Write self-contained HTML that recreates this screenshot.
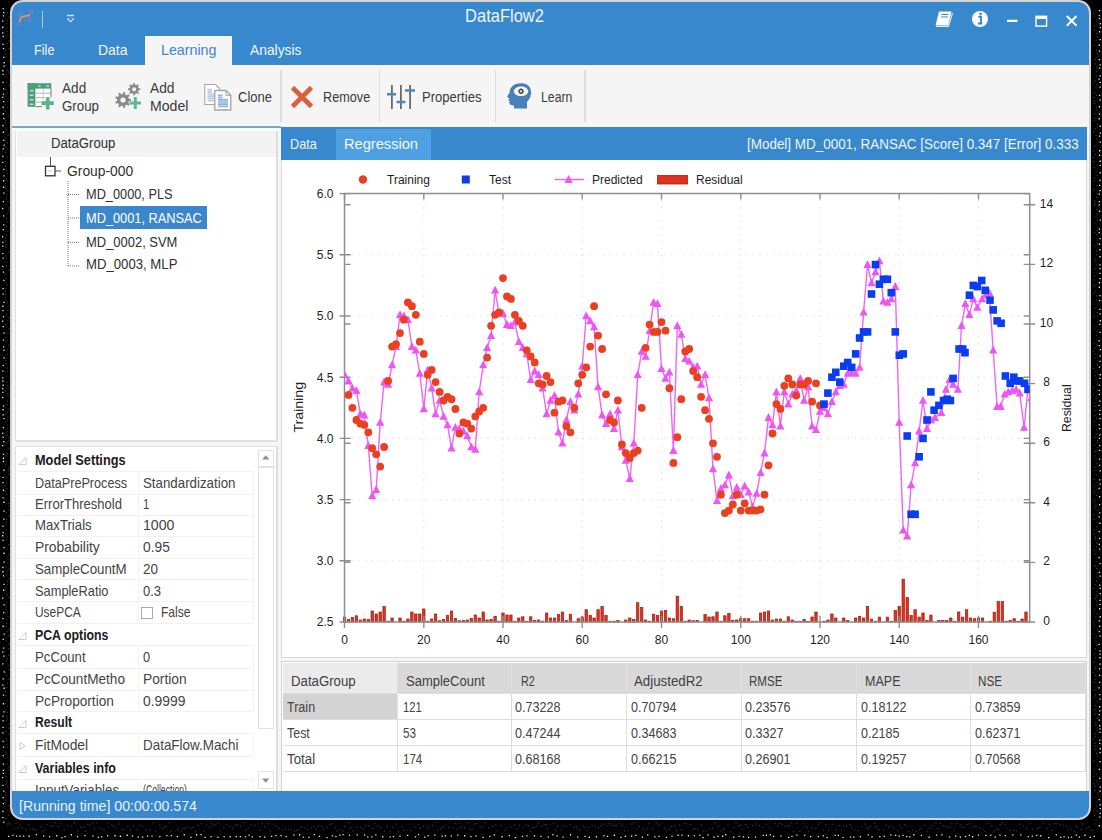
<!DOCTYPE html><html><head><meta charset="utf-8"><style>
html,body{margin:0;padding:0;}
body{width:1102px;height:840px;background:#000;position:relative;overflow:hidden;font-family:"Liberation Sans", sans-serif;}
#win{position:absolute;left:10px;top:0;width:1081px;height:820px;box-sizing:border-box;border:2px solid #d3d3d3;border-radius:12.5px;overflow:hidden;background:#f5f5f5;}
#in{position:absolute;left:-12px;top:-2px;width:1102px;height:840px;}
.r{position:absolute;}
.t{position:absolute;white-space:nowrap;line-height:1;}
</style></head><body><svg style="position:absolute;left:0;top:0" width="1102" height="840"><path d="M6.7 12.0h1.2v1.2h-1.2zM8.1 16.3h1.2v1.2h-1.2zM7.0 19.6h1.2v1.2h-1.2zM6.5 23.1h1.2v1.2h-1.2zM6.3 27.2h1.2v1.2h-1.2zM6.4 30.8h1.2v1.2h-1.2zM7.3 35.6h1.2v1.2h-1.2zM8.3 40.3h1.2v1.2h-1.2zM6.7 43.0h1.2v1.2h-1.2zM7.9 47.9h1.2v1.2h-1.2zM5.0 50.3h1.2v1.2h-1.2zM4.8 53.6h1.2v1.2h-1.2zM4.8 56.3h1.2v1.2h-1.2zM7.6 60.3h1.2v1.2h-1.2zM5.1 65.0h1.2v1.2h-1.2zM7.1 69.2h1.2v1.2h-1.2zM8.0 71.6h1.2v1.2h-1.2zM5.4 76.5h1.2v1.2h-1.2zM6.1 81.4h1.2v1.2h-1.2zM8.5 84.8h1.2v1.2h-1.2zM5.1 89.3h1.2v1.2h-1.2zM6.6 92.6h1.2v1.2h-1.2zM5.3 95.6h1.2v1.2h-1.2zM7.4 98.6h1.2v1.2h-1.2zM6.7 100.6h1.2v1.2h-1.2zM4.6 104.0h1.2v1.2h-1.2zM7.0 107.0h1.2v1.2h-1.2zM4.8 110.5h1.2v1.2h-1.2zM7.7 115.5h1.2v1.2h-1.2zM4.9 120.4h1.2v1.2h-1.2zM4.7 123.2h1.2v1.2h-1.2zM5.6 127.5h1.2v1.2h-1.2zM6.2 129.9h1.2v1.2h-1.2zM7.8 134.6h1.2v1.2h-1.2zM5.1 137.4h1.2v1.2h-1.2zM6.8 142.2h1.2v1.2h-1.2zM4.9 146.3h1.2v1.2h-1.2zM7.3 148.4h1.2v1.2h-1.2zM4.8 151.7h1.2v1.2h-1.2zM7.0 156.5h1.2v1.2h-1.2zM4.8 160.9h1.2v1.2h-1.2zM4.8 165.5h1.2v1.2h-1.2zM6.3 170.1h1.2v1.2h-1.2zM6.7 173.1h1.2v1.2h-1.2zM5.6 177.9h1.2v1.2h-1.2zM6.6 180.3h1.2v1.2h-1.2zM4.9 183.0h1.2v1.2h-1.2zM4.7 185.5h1.2v1.2h-1.2zM5.7 188.1h1.2v1.2h-1.2zM7.5 191.0h1.2v1.2h-1.2zM6.5 193.9h1.2v1.2h-1.2zM5.9 196.4h1.2v1.2h-1.2zM5.5 198.5h1.2v1.2h-1.2zM7.4 200.5h1.2v1.2h-1.2zM5.3 204.2h1.2v1.2h-1.2zM8.2 207.6h1.2v1.2h-1.2zM7.8 209.9h1.2v1.2h-1.2zM6.5 213.2h1.2v1.2h-1.2zM6.1 217.7h1.2v1.2h-1.2zM7.3 221.2h1.2v1.2h-1.2zM5.9 226.2h1.2v1.2h-1.2zM7.3 230.7h1.2v1.2h-1.2zM6.1 234.6h1.2v1.2h-1.2zM4.7 237.6h1.2v1.2h-1.2zM4.8 240.0h1.2v1.2h-1.2zM5.5 244.2h1.2v1.2h-1.2zM4.8 246.7h1.2v1.2h-1.2zM8.0 251.2h1.2v1.2h-1.2zM5.6 255.2h1.2v1.2h-1.2zM5.7 258.0h1.2v1.2h-1.2zM5.1 261.4h1.2v1.2h-1.2zM5.6 264.7h1.2v1.2h-1.2zM8.4 269.6h1.2v1.2h-1.2zM5.5 273.2h1.2v1.2h-1.2zM5.7 278.1h1.2v1.2h-1.2zM4.5 281.2h1.2v1.2h-1.2zM6.4 284.3h1.2v1.2h-1.2zM5.3 287.8h1.2v1.2h-1.2zM4.5 291.3h1.2v1.2h-1.2zM4.9 294.1h1.2v1.2h-1.2zM4.7 297.3h1.2v1.2h-1.2zM5.7 299.4h1.2v1.2h-1.2zM6.8 302.1h1.2v1.2h-1.2zM7.5 305.7h1.2v1.2h-1.2zM7.4 309.7h1.2v1.2h-1.2zM6.1 314.3h1.2v1.2h-1.2zM8.4 317.3h1.2v1.2h-1.2zM7.4 319.7h1.2v1.2h-1.2zM4.7 323.7h1.2v1.2h-1.2zM8.1 328.2h1.2v1.2h-1.2zM7.4 332.0h1.2v1.2h-1.2zM5.1 336.5h1.2v1.2h-1.2zM6.5 340.1h1.2v1.2h-1.2zM7.7 344.6h1.2v1.2h-1.2zM6.8 349.0h1.2v1.2h-1.2zM7.2 353.7h1.2v1.2h-1.2zM5.4 357.8h1.2v1.2h-1.2zM5.0 359.9h1.2v1.2h-1.2zM4.9 363.0h1.2v1.2h-1.2zM6.7 367.5h1.2v1.2h-1.2zM7.0 371.4h1.2v1.2h-1.2zM6.5 375.4h1.2v1.2h-1.2zM7.7 377.4h1.2v1.2h-1.2zM6.5 381.7h1.2v1.2h-1.2zM7.1 385.3h1.2v1.2h-1.2zM7.4 387.5h1.2v1.2h-1.2zM4.8 390.2h1.2v1.2h-1.2zM7.4 393.0h1.2v1.2h-1.2zM7.5 395.6h1.2v1.2h-1.2zM6.5 400.6h1.2v1.2h-1.2zM6.4 403.7h1.2v1.2h-1.2zM7.6 407.8h1.2v1.2h-1.2zM7.1 411.6h1.2v1.2h-1.2zM5.1 413.8h1.2v1.2h-1.2zM7.5 416.6h1.2v1.2h-1.2zM6.8 419.5h1.2v1.2h-1.2zM4.7 421.6h1.2v1.2h-1.2zM7.2 424.4h1.2v1.2h-1.2zM7.2 428.4h1.2v1.2h-1.2zM6.6 431.3h1.2v1.2h-1.2zM6.4 434.7h1.2v1.2h-1.2zM8.1 437.1h1.2v1.2h-1.2zM8.4 439.7h1.2v1.2h-1.2zM4.6 444.5h1.2v1.2h-1.2zM7.8 447.8h1.2v1.2h-1.2zM6.3 452.7h1.2v1.2h-1.2zM5.3 455.6h1.2v1.2h-1.2zM5.3 460.4h1.2v1.2h-1.2zM5.1 464.1h1.2v1.2h-1.2zM8.3 467.7h1.2v1.2h-1.2zM7.8 470.1h1.2v1.2h-1.2zM8.0 473.6h1.2v1.2h-1.2zM5.4 477.7h1.2v1.2h-1.2zM6.4 482.4h1.2v1.2h-1.2zM4.5 484.5h1.2v1.2h-1.2zM6.3 488.0h1.2v1.2h-1.2zM5.1 490.9h1.2v1.2h-1.2zM5.8 493.9h1.2v1.2h-1.2zM4.5 498.4h1.2v1.2h-1.2zM7.9 502.7h1.2v1.2h-1.2zM8.2 505.1h1.2v1.2h-1.2zM8.1 509.2h1.2v1.2h-1.2zM6.0 512.1h1.2v1.2h-1.2zM8.5 515.2h1.2v1.2h-1.2zM5.9 519.0h1.2v1.2h-1.2zM5.6 522.3h1.2v1.2h-1.2zM4.9 524.4h1.2v1.2h-1.2zM5.6 528.9h1.2v1.2h-1.2zM5.5 533.8h1.2v1.2h-1.2zM6.5 536.5h1.2v1.2h-1.2zM6.0 539.1h1.2v1.2h-1.2zM8.0 544.0h1.2v1.2h-1.2zM7.0 548.4h1.2v1.2h-1.2zM8.3 553.2h1.2v1.2h-1.2zM7.4 556.8h1.2v1.2h-1.2zM7.4 559.0h1.2v1.2h-1.2zM7.5 562.3h1.2v1.2h-1.2zM5.6 566.2h1.2v1.2h-1.2zM8.2 568.4h1.2v1.2h-1.2zM6.4 570.8h1.2v1.2h-1.2zM5.7 573.8h1.2v1.2h-1.2zM8.4 578.0h1.2v1.2h-1.2zM7.1 580.8h1.2v1.2h-1.2zM6.7 583.7h1.2v1.2h-1.2zM5.2 586.9h1.2v1.2h-1.2zM5.3 589.4h1.2v1.2h-1.2zM6.5 594.1h1.2v1.2h-1.2zM8.1 596.8h1.2v1.2h-1.2zM6.3 601.7h1.2v1.2h-1.2zM5.3 604.2h1.2v1.2h-1.2zM5.9 606.4h1.2v1.2h-1.2zM5.5 608.7h1.2v1.2h-1.2zM6.8 611.5h1.2v1.2h-1.2zM7.5 616.1h1.2v1.2h-1.2zM6.2 619.4h1.2v1.2h-1.2zM6.0 623.0h1.2v1.2h-1.2zM4.7 626.0h1.2v1.2h-1.2zM8.4 628.8h1.2v1.2h-1.2zM6.5 631.2h1.2v1.2h-1.2zM8.0 635.1h1.2v1.2h-1.2zM5.6 637.7h1.2v1.2h-1.2zM6.1 640.5h1.2v1.2h-1.2zM8.3 643.8h1.2v1.2h-1.2zM8.0 648.3h1.2v1.2h-1.2zM4.6 650.4h1.2v1.2h-1.2zM8.1 654.5h1.2v1.2h-1.2zM6.8 658.0h1.2v1.2h-1.2zM6.1 660.0h1.2v1.2h-1.2zM7.8 664.7h1.2v1.2h-1.2zM8.4 669.3h1.2v1.2h-1.2zM4.9 672.0h1.2v1.2h-1.2zM6.6 674.5h1.2v1.2h-1.2zM8.3 678.6h1.2v1.2h-1.2zM7.1 682.7h1.2v1.2h-1.2zM6.3 687.0h1.2v1.2h-1.2zM4.7 690.7h1.2v1.2h-1.2zM5.4 695.0h1.2v1.2h-1.2zM7.1 699.8h1.2v1.2h-1.2zM5.0 702.7h1.2v1.2h-1.2zM7.0 705.4h1.2v1.2h-1.2zM4.9 709.5h1.2v1.2h-1.2zM6.6 711.8h1.2v1.2h-1.2zM6.1 715.5h1.2v1.2h-1.2zM6.9 718.2h1.2v1.2h-1.2zM5.7 720.2h1.2v1.2h-1.2zM8.3 723.6h1.2v1.2h-1.2zM8.0 727.5h1.2v1.2h-1.2zM5.4 730.9h1.2v1.2h-1.2zM8.3 733.7h1.2v1.2h-1.2zM5.7 737.8h1.2v1.2h-1.2zM6.5 739.9h1.2v1.2h-1.2zM6.2 743.9h1.2v1.2h-1.2zM7.2 746.7h1.2v1.2h-1.2zM5.4 751.4h1.2v1.2h-1.2zM5.9 753.5h1.2v1.2h-1.2zM7.2 756.8h1.2v1.2h-1.2zM7.7 759.4h1.2v1.2h-1.2zM6.5 763.6h1.2v1.2h-1.2zM8.4 766.2h1.2v1.2h-1.2zM7.8 769.2h1.2v1.2h-1.2zM5.4 771.9h1.2v1.2h-1.2zM5.7 776.1h1.2v1.2h-1.2zM6.5 781.0h1.2v1.2h-1.2zM5.4 783.6h1.2v1.2h-1.2zM7.2 786.8h1.2v1.2h-1.2zM5.1 791.7h1.2v1.2h-1.2zM5.4 794.8h1.2v1.2h-1.2zM5.1 799.8h1.2v1.2h-1.2zM4.7 801.9h1.2v1.2h-1.2zM8.1 805.1h1.2v1.2h-1.2zM7.4 809.7h1.2v1.2h-1.2zM8.2 814.7h1.2v1.2h-1.2zM5.2 817.7h1.2v1.2h-1.2zM7.5 822.5h1.2v1.2h-1.2zM7.2 824.6h1.2v1.2h-1.2zM1095.3 10.0h1.2v1.2h-1.2zM1093.2 13.0h1.2v1.2h-1.2zM1093.7 15.5h1.2v1.2h-1.2zM1096.1 20.3h1.2v1.2h-1.2zM1093.8 25.0h1.2v1.2h-1.2zM1093.5 29.4h1.2v1.2h-1.2zM1095.9 32.9h1.2v1.2h-1.2zM1096.9 36.0h1.2v1.2h-1.2zM1095.6 39.7h1.2v1.2h-1.2zM1093.5 44.3h1.2v1.2h-1.2zM1095.8 49.3h1.2v1.2h-1.2zM1096.6 52.5h1.2v1.2h-1.2zM1097.5 55.3h1.2v1.2h-1.2zM1094.6 59.0h1.2v1.2h-1.2zM1095.0 63.3h1.2v1.2h-1.2zM1096.3 65.9h1.2v1.2h-1.2zM1096.7 68.0h1.2v1.2h-1.2zM1095.9 70.8h1.2v1.2h-1.2zM1095.6 75.7h1.2v1.2h-1.2zM1094.4 79.7h1.2v1.2h-1.2zM1093.2 81.7h1.2v1.2h-1.2zM1095.8 84.2h1.2v1.2h-1.2zM1095.3 87.4h1.2v1.2h-1.2zM1093.6 92.1h1.2v1.2h-1.2zM1095.9 94.8h1.2v1.2h-1.2zM1093.0 96.9h1.2v1.2h-1.2zM1093.5 99.9h1.2v1.2h-1.2zM1094.0 103.0h1.2v1.2h-1.2zM1095.7 106.8h1.2v1.2h-1.2zM1095.8 109.4h1.2v1.2h-1.2zM1093.6 112.8h1.2v1.2h-1.2zM1094.1 117.6h1.2v1.2h-1.2zM1093.4 120.1h1.2v1.2h-1.2zM1096.9 124.0h1.2v1.2h-1.2zM1094.8 128.3h1.2v1.2h-1.2zM1093.1 131.1h1.2v1.2h-1.2zM1095.5 135.1h1.2v1.2h-1.2zM1095.9 138.1h1.2v1.2h-1.2zM1097.2 141.4h1.2v1.2h-1.2zM1094.1 145.6h1.2v1.2h-1.2zM1093.2 150.3h1.2v1.2h-1.2zM1094.8 153.9h1.2v1.2h-1.2zM1093.3 156.7h1.2v1.2h-1.2zM1093.1 161.0h1.2v1.2h-1.2zM1097.2 164.6h1.2v1.2h-1.2zM1093.9 167.1h1.2v1.2h-1.2zM1095.3 170.9h1.2v1.2h-1.2zM1096.7 174.8h1.2v1.2h-1.2zM1094.4 177.3h1.2v1.2h-1.2zM1093.2 180.2h1.2v1.2h-1.2zM1096.5 184.9h1.2v1.2h-1.2zM1093.0 189.1h1.2v1.2h-1.2zM1096.4 193.6h1.2v1.2h-1.2zM1096.3 197.0h1.2v1.2h-1.2zM1094.0 200.3h1.2v1.2h-1.2zM1094.0 202.7h1.2v1.2h-1.2zM1094.5 204.8h1.2v1.2h-1.2zM1096.1 209.0h1.2v1.2h-1.2zM1096.2 213.6h1.2v1.2h-1.2zM1095.5 216.4h1.2v1.2h-1.2zM1096.5 219.7h1.2v1.2h-1.2zM1094.2 223.2h1.2v1.2h-1.2zM1097.3 227.2h1.2v1.2h-1.2zM1097.0 229.8h1.2v1.2h-1.2zM1094.2 231.9h1.2v1.2h-1.2zM1096.3 234.6h1.2v1.2h-1.2zM1096.4 239.4h1.2v1.2h-1.2zM1097.0 242.4h1.2v1.2h-1.2zM1094.1 245.4h1.2v1.2h-1.2zM1095.8 250.1h1.2v1.2h-1.2zM1096.0 254.2h1.2v1.2h-1.2zM1095.1 259.1h1.2v1.2h-1.2zM1096.1 263.6h1.2v1.2h-1.2zM1095.0 268.2h1.2v1.2h-1.2zM1095.6 272.4h1.2v1.2h-1.2zM1094.0 275.3h1.2v1.2h-1.2zM1093.4 279.2h1.2v1.2h-1.2zM1093.7 283.9h1.2v1.2h-1.2zM1093.5 286.0h1.2v1.2h-1.2zM1094.6 290.8h1.2v1.2h-1.2zM1093.1 293.2h1.2v1.2h-1.2zM1096.1 295.3h1.2v1.2h-1.2zM1096.1 299.2h1.2v1.2h-1.2zM1093.3 303.4h1.2v1.2h-1.2zM1094.6 307.2h1.2v1.2h-1.2zM1096.7 311.7h1.2v1.2h-1.2zM1093.3 316.3h1.2v1.2h-1.2zM1097.1 320.9h1.2v1.2h-1.2zM1093.5 325.8h1.2v1.2h-1.2zM1093.5 328.4h1.2v1.2h-1.2zM1096.8 330.5h1.2v1.2h-1.2zM1095.9 334.9h1.2v1.2h-1.2zM1095.8 339.4h1.2v1.2h-1.2zM1093.4 342.3h1.2v1.2h-1.2zM1096.4 344.6h1.2v1.2h-1.2zM1094.4 347.2h1.2v1.2h-1.2zM1093.1 350.4h1.2v1.2h-1.2zM1094.3 353.2h1.2v1.2h-1.2zM1094.7 357.4h1.2v1.2h-1.2zM1097.3 360.3h1.2v1.2h-1.2zM1096.8 363.8h1.2v1.2h-1.2zM1093.1 367.7h1.2v1.2h-1.2zM1095.0 370.9h1.2v1.2h-1.2zM1094.6 375.2h1.2v1.2h-1.2zM1095.4 379.4h1.2v1.2h-1.2zM1096.9 382.0h1.2v1.2h-1.2zM1096.7 384.3h1.2v1.2h-1.2zM1093.0 386.8h1.2v1.2h-1.2zM1096.4 389.4h1.2v1.2h-1.2zM1093.0 394.3h1.2v1.2h-1.2zM1095.2 397.8h1.2v1.2h-1.2zM1093.8 402.2h1.2v1.2h-1.2zM1094.6 405.7h1.2v1.2h-1.2zM1094.2 410.2h1.2v1.2h-1.2zM1094.3 415.0h1.2v1.2h-1.2zM1096.1 417.6h1.2v1.2h-1.2zM1093.5 421.1h1.2v1.2h-1.2zM1093.4 425.1h1.2v1.2h-1.2zM1096.1 429.4h1.2v1.2h-1.2zM1095.8 433.8h1.2v1.2h-1.2zM1094.8 436.8h1.2v1.2h-1.2zM1097.0 440.0h1.2v1.2h-1.2zM1097.0 442.3h1.2v1.2h-1.2zM1093.9 444.4h1.2v1.2h-1.2zM1097.1 447.1h1.2v1.2h-1.2zM1094.7 450.7h1.2v1.2h-1.2zM1094.1 455.3h1.2v1.2h-1.2zM1095.4 458.7h1.2v1.2h-1.2zM1096.4 463.0h1.2v1.2h-1.2zM1094.6 466.9h1.2v1.2h-1.2zM1093.7 469.9h1.2v1.2h-1.2zM1096.0 474.4h1.2v1.2h-1.2zM1093.8 478.6h1.2v1.2h-1.2zM1096.5 481.9h1.2v1.2h-1.2zM1093.6 485.7h1.2v1.2h-1.2zM1097.0 489.1h1.2v1.2h-1.2zM1093.9 491.8h1.2v1.2h-1.2zM1096.2 494.7h1.2v1.2h-1.2zM1093.7 499.2h1.2v1.2h-1.2zM1094.1 501.7h1.2v1.2h-1.2zM1095.3 504.7h1.2v1.2h-1.2zM1094.5 507.1h1.2v1.2h-1.2zM1097.4 509.7h1.2v1.2h-1.2zM1093.5 513.9h1.2v1.2h-1.2zM1093.5 518.8h1.2v1.2h-1.2zM1097.4 521.9h1.2v1.2h-1.2zM1096.3 526.3h1.2v1.2h-1.2zM1093.9 529.6h1.2v1.2h-1.2zM1093.5 533.5h1.2v1.2h-1.2zM1094.7 536.2h1.2v1.2h-1.2zM1094.8 538.3h1.2v1.2h-1.2zM1096.1 542.6h1.2v1.2h-1.2zM1095.8 546.1h1.2v1.2h-1.2zM1093.6 549.5h1.2v1.2h-1.2zM1094.8 553.3h1.2v1.2h-1.2zM1097.1 557.6h1.2v1.2h-1.2zM1095.6 560.9h1.2v1.2h-1.2zM1094.9 565.1h1.2v1.2h-1.2zM1096.2 567.8h1.2v1.2h-1.2zM1096.5 572.4h1.2v1.2h-1.2zM1096.8 576.5h1.2v1.2h-1.2zM1095.9 580.6h1.2v1.2h-1.2zM1094.4 583.9h1.2v1.2h-1.2zM1093.4 587.8h1.2v1.2h-1.2zM1096.5 591.1h1.2v1.2h-1.2zM1095.8 595.2h1.2v1.2h-1.2zM1094.9 598.0h1.2v1.2h-1.2zM1095.8 601.3h1.2v1.2h-1.2zM1096.0 604.6h1.2v1.2h-1.2zM1093.8 609.3h1.2v1.2h-1.2zM1096.5 613.3h1.2v1.2h-1.2zM1095.2 616.5h1.2v1.2h-1.2zM1093.2 621.4h1.2v1.2h-1.2zM1093.7 625.0h1.2v1.2h-1.2zM1097.2 629.4h1.2v1.2h-1.2zM1093.5 632.9h1.2v1.2h-1.2zM1095.4 636.7h1.2v1.2h-1.2zM1095.3 640.8h1.2v1.2h-1.2zM1096.7 644.7h1.2v1.2h-1.2zM1094.8 648.3h1.2v1.2h-1.2zM1093.9 653.1h1.2v1.2h-1.2zM1094.8 657.2h1.2v1.2h-1.2zM1093.6 661.5h1.2v1.2h-1.2zM1094.6 666.4h1.2v1.2h-1.2zM1094.2 668.6h1.2v1.2h-1.2zM1093.1 671.8h1.2v1.2h-1.2zM1094.9 675.1h1.2v1.2h-1.2zM1094.6 679.1h1.2v1.2h-1.2zM1094.0 681.9h1.2v1.2h-1.2zM1097.2 686.2h1.2v1.2h-1.2zM1094.0 689.7h1.2v1.2h-1.2zM1094.8 694.2h1.2v1.2h-1.2zM1093.6 696.8h1.2v1.2h-1.2zM1096.6 701.1h1.2v1.2h-1.2zM1095.1 705.0h1.2v1.2h-1.2zM1094.0 708.7h1.2v1.2h-1.2zM1094.6 713.6h1.2v1.2h-1.2zM1096.7 717.5h1.2v1.2h-1.2zM1095.1 722.0h1.2v1.2h-1.2zM1095.5 724.8h1.2v1.2h-1.2zM1096.8 727.2h1.2v1.2h-1.2zM1096.8 730.3h1.2v1.2h-1.2zM1094.7 733.1h1.2v1.2h-1.2zM1094.9 735.8h1.2v1.2h-1.2zM1093.0 738.4h1.2v1.2h-1.2zM1094.3 742.6h1.2v1.2h-1.2zM1094.4 745.3h1.2v1.2h-1.2zM1094.9 748.7h1.2v1.2h-1.2zM1096.0 752.7h1.2v1.2h-1.2zM1097.2 755.7h1.2v1.2h-1.2zM1093.3 760.3h1.2v1.2h-1.2zM1097.1 764.8h1.2v1.2h-1.2zM1093.6 769.1h1.2v1.2h-1.2zM1095.8 773.6h1.2v1.2h-1.2zM1093.1 775.7h1.2v1.2h-1.2zM1096.0 780.5h1.2v1.2h-1.2zM1093.5 783.3h1.2v1.2h-1.2zM1094.1 785.7h1.2v1.2h-1.2zM1094.6 790.0h1.2v1.2h-1.2zM1097.1 792.5h1.2v1.2h-1.2zM1093.8 796.9h1.2v1.2h-1.2zM1095.7 801.6h1.2v1.2h-1.2zM1096.0 805.9h1.2v1.2h-1.2zM1096.5 810.6h1.2v1.2h-1.2zM1093.9 815.1h1.2v1.2h-1.2zM1095.4 819.2h1.2v1.2h-1.2zM1095.0 823.4h1.2v1.2h-1.2zM10.0 823.6h1.2v1.2h-1.2zM13.4 828.4h1.2v1.2h-1.2zM15.4 822.7h1.2v1.2h-1.2zM17.1 827.5h1.2v1.2h-1.2zM19.9 824.5h1.2v1.2h-1.2zM21.9 827.5h1.2v1.2h-1.2zM25.2 829.3h1.2v1.2h-1.2zM28.1 823.8h1.2v1.2h-1.2zM29.8 828.6h1.2v1.2h-1.2zM32.3 828.5h1.2v1.2h-1.2zM33.9 829.3h1.2v1.2h-1.2zM36.3 829.6h1.2v1.2h-1.2zM39.9 826.4h1.2v1.2h-1.2zM41.5 830.2h1.2v1.2h-1.2zM44.2 829.8h1.2v1.2h-1.2zM46.3 823.7h1.2v1.2h-1.2zM49.9 825.3h1.2v1.2h-1.2zM51.8 825.3h1.2v1.2h-1.2zM54.8 822.0h1.2v1.2h-1.2zM57.6 826.0h1.2v1.2h-1.2zM60.4 823.1h1.2v1.2h-1.2zM63.7 829.3h1.2v1.2h-1.2zM67.3 824.9h1.2v1.2h-1.2zM70.6 825.4h1.2v1.2h-1.2zM74.0 822.6h1.2v1.2h-1.2zM77.7 830.6h1.2v1.2h-1.2zM80.4 826.6h1.2v1.2h-1.2zM83.3 826.8h1.2v1.2h-1.2zM84.8 830.7h1.2v1.2h-1.2zM86.9 823.6h1.2v1.2h-1.2zM88.6 824.3h1.2v1.2h-1.2zM92.2 822.3h1.2v1.2h-1.2zM93.9 828.3h1.2v1.2h-1.2zM95.9 822.2h1.2v1.2h-1.2zM98.9 827.2h1.2v1.2h-1.2zM101.7 828.3h1.2v1.2h-1.2zM103.5 829.8h1.2v1.2h-1.2zM106.7 822.4h1.2v1.2h-1.2zM108.6 826.4h1.2v1.2h-1.2zM111.3 824.5h1.2v1.2h-1.2zM113.1 825.7h1.2v1.2h-1.2zM115.0 827.3h1.2v1.2h-1.2zM118.6 823.3h1.2v1.2h-1.2zM121.5 828.7h1.2v1.2h-1.2zM123.4 829.4h1.2v1.2h-1.2zM127.3 825.5h1.2v1.2h-1.2zM129.8 829.6h1.2v1.2h-1.2zM132.7 825.6h1.2v1.2h-1.2zM136.5 829.0h1.2v1.2h-1.2zM138.9 824.2h1.2v1.2h-1.2zM141.2 825.9h1.2v1.2h-1.2zM145.1 829.2h1.2v1.2h-1.2zM148.9 829.3h1.2v1.2h-1.2zM152.5 822.5h1.2v1.2h-1.2zM155.3 830.6h1.2v1.2h-1.2zM159.2 824.2h1.2v1.2h-1.2zM161.7 827.7h1.2v1.2h-1.2zM164.1 826.8h1.2v1.2h-1.2zM165.8 825.9h1.2v1.2h-1.2zM168.6 822.2h1.2v1.2h-1.2zM170.4 830.7h1.2v1.2h-1.2zM173.9 830.4h1.2v1.2h-1.2zM177.0 829.3h1.2v1.2h-1.2zM180.7 830.0h1.2v1.2h-1.2zM182.2 827.8h1.2v1.2h-1.2zM184.4 828.1h1.2v1.2h-1.2zM186.6 826.9h1.2v1.2h-1.2zM190.4 827.6h1.2v1.2h-1.2zM192.5 826.7h1.2v1.2h-1.2zM195.1 830.6h1.2v1.2h-1.2zM197.3 824.7h1.2v1.2h-1.2zM200.5 823.1h1.2v1.2h-1.2zM203.4 830.6h1.2v1.2h-1.2zM206.2 824.4h1.2v1.2h-1.2zM208.9 826.8h1.2v1.2h-1.2zM210.8 823.1h1.2v1.2h-1.2zM212.6 824.6h1.2v1.2h-1.2zM215.1 824.6h1.2v1.2h-1.2zM217.2 822.8h1.2v1.2h-1.2zM220.1 829.6h1.2v1.2h-1.2zM223.1 827.1h1.2v1.2h-1.2zM226.2 823.8h1.2v1.2h-1.2zM229.5 826.1h1.2v1.2h-1.2zM232.4 827.5h1.2v1.2h-1.2zM235.1 824.8h1.2v1.2h-1.2zM237.2 824.0h1.2v1.2h-1.2zM239.9 825.4h1.2v1.2h-1.2zM242.9 822.1h1.2v1.2h-1.2zM245.3 829.8h1.2v1.2h-1.2zM247.4 827.0h1.2v1.2h-1.2zM250.1 824.6h1.2v1.2h-1.2zM254.1 824.7h1.2v1.2h-1.2zM257.5 823.4h1.2v1.2h-1.2zM259.2 829.8h1.2v1.2h-1.2zM261.8 822.6h1.2v1.2h-1.2zM264.2 826.0h1.2v1.2h-1.2zM267.6 823.0h1.2v1.2h-1.2zM269.6 830.6h1.2v1.2h-1.2zM273.0 823.4h1.2v1.2h-1.2zM275.3 825.2h1.2v1.2h-1.2zM278.5 827.5h1.2v1.2h-1.2zM282.1 829.4h1.2v1.2h-1.2zM284.9 828.6h1.2v1.2h-1.2zM288.3 828.8h1.2v1.2h-1.2zM291.0 829.1h1.2v1.2h-1.2zM294.3 830.2h1.2v1.2h-1.2zM296.1 829.8h1.2v1.2h-1.2zM297.6 828.9h1.2v1.2h-1.2zM300.6 826.5h1.2v1.2h-1.2zM304.5 827.1h1.2v1.2h-1.2zM307.0 829.1h1.2v1.2h-1.2zM310.7 827.5h1.2v1.2h-1.2zM313.1 826.1h1.2v1.2h-1.2zM315.8 828.5h1.2v1.2h-1.2zM318.0 825.5h1.2v1.2h-1.2zM320.9 825.5h1.2v1.2h-1.2zM323.2 829.1h1.2v1.2h-1.2zM326.8 826.5h1.2v1.2h-1.2zM329.4 823.7h1.2v1.2h-1.2zM331.7 823.3h1.2v1.2h-1.2zM334.6 827.2h1.2v1.2h-1.2zM336.4 830.3h1.2v1.2h-1.2zM338.7 829.6h1.2v1.2h-1.2zM342.3 830.6h1.2v1.2h-1.2zM344.3 825.8h1.2v1.2h-1.2zM348.1 822.1h1.2v1.2h-1.2zM349.7 827.1h1.2v1.2h-1.2zM352.4 830.3h1.2v1.2h-1.2zM355.8 826.8h1.2v1.2h-1.2zM359.8 826.7h1.2v1.2h-1.2zM362.6 828.2h1.2v1.2h-1.2zM365.1 825.2h1.2v1.2h-1.2zM368.1 825.2h1.2v1.2h-1.2zM372.0 828.1h1.2v1.2h-1.2zM374.8 822.9h1.2v1.2h-1.2zM377.2 825.6h1.2v1.2h-1.2zM380.1 827.2h1.2v1.2h-1.2zM383.8 830.7h1.2v1.2h-1.2zM386.5 826.0h1.2v1.2h-1.2zM389.6 831.0h1.2v1.2h-1.2zM392.0 826.8h1.2v1.2h-1.2zM395.5 823.5h1.2v1.2h-1.2zM397.8 830.8h1.2v1.2h-1.2zM401.4 826.6h1.2v1.2h-1.2zM403.1 830.1h1.2v1.2h-1.2zM406.4 829.4h1.2v1.2h-1.2zM410.3 830.0h1.2v1.2h-1.2zM412.9 823.4h1.2v1.2h-1.2zM415.1 826.6h1.2v1.2h-1.2zM417.9 823.7h1.2v1.2h-1.2zM419.8 827.7h1.2v1.2h-1.2zM422.8 825.2h1.2v1.2h-1.2zM426.8 827.7h1.2v1.2h-1.2zM428.4 825.7h1.2v1.2h-1.2zM431.9 824.8h1.2v1.2h-1.2zM435.1 822.0h1.2v1.2h-1.2zM437.4 829.6h1.2v1.2h-1.2zM440.3 828.0h1.2v1.2h-1.2zM442.3 826.5h1.2v1.2h-1.2zM445.2 824.4h1.2v1.2h-1.2zM448.3 826.8h1.2v1.2h-1.2zM452.3 827.2h1.2v1.2h-1.2zM454.9 823.1h1.2v1.2h-1.2zM456.8 828.8h1.2v1.2h-1.2zM458.5 822.9h1.2v1.2h-1.2zM460.4 826.7h1.2v1.2h-1.2zM464.0 827.5h1.2v1.2h-1.2zM467.5 822.6h1.2v1.2h-1.2zM469.1 828.9h1.2v1.2h-1.2zM471.4 828.4h1.2v1.2h-1.2zM473.7 823.5h1.2v1.2h-1.2zM475.9 822.9h1.2v1.2h-1.2zM479.7 827.2h1.2v1.2h-1.2zM482.0 826.0h1.2v1.2h-1.2zM484.5 822.5h1.2v1.2h-1.2zM488.2 827.2h1.2v1.2h-1.2zM492.1 826.0h1.2v1.2h-1.2zM495.2 824.2h1.2v1.2h-1.2zM496.8 830.4h1.2v1.2h-1.2zM500.4 824.8h1.2v1.2h-1.2zM504.2 829.3h1.2v1.2h-1.2zM506.4 827.4h1.2v1.2h-1.2zM510.3 826.5h1.2v1.2h-1.2zM514.2 824.2h1.2v1.2h-1.2zM516.7 828.5h1.2v1.2h-1.2zM518.7 824.8h1.2v1.2h-1.2zM522.4 826.4h1.2v1.2h-1.2zM525.9 824.2h1.2v1.2h-1.2zM527.8 825.2h1.2v1.2h-1.2zM529.8 830.7h1.2v1.2h-1.2zM532.0 827.1h1.2v1.2h-1.2zM533.8 826.8h1.2v1.2h-1.2zM536.3 825.6h1.2v1.2h-1.2zM537.9 823.1h1.2v1.2h-1.2zM541.5 825.2h1.2v1.2h-1.2zM543.6 823.7h1.2v1.2h-1.2zM545.8 824.1h1.2v1.2h-1.2zM547.4 828.0h1.2v1.2h-1.2zM549.8 823.4h1.2v1.2h-1.2zM553.0 822.8h1.2v1.2h-1.2zM555.2 829.5h1.2v1.2h-1.2zM557.0 826.0h1.2v1.2h-1.2zM560.6 829.2h1.2v1.2h-1.2zM562.5 825.2h1.2v1.2h-1.2zM565.8 825.4h1.2v1.2h-1.2zM569.7 823.9h1.2v1.2h-1.2zM573.6 826.5h1.2v1.2h-1.2zM575.7 826.1h1.2v1.2h-1.2zM577.5 828.4h1.2v1.2h-1.2zM579.6 830.1h1.2v1.2h-1.2zM582.6 825.3h1.2v1.2h-1.2zM584.7 827.5h1.2v1.2h-1.2zM586.8 829.9h1.2v1.2h-1.2zM588.6 826.6h1.2v1.2h-1.2zM591.4 824.4h1.2v1.2h-1.2zM594.9 825.5h1.2v1.2h-1.2zM598.0 827.1h1.2v1.2h-1.2zM600.3 825.5h1.2v1.2h-1.2zM602.0 823.6h1.2v1.2h-1.2zM605.6 824.9h1.2v1.2h-1.2zM608.8 823.0h1.2v1.2h-1.2zM611.7 825.3h1.2v1.2h-1.2zM614.4 824.7h1.2v1.2h-1.2zM616.1 824.8h1.2v1.2h-1.2zM618.2 823.1h1.2v1.2h-1.2zM621.5 824.5h1.2v1.2h-1.2zM624.0 830.2h1.2v1.2h-1.2zM627.4 829.9h1.2v1.2h-1.2zM631.1 823.2h1.2v1.2h-1.2zM633.2 822.3h1.2v1.2h-1.2zM636.4 828.0h1.2v1.2h-1.2zM638.8 825.7h1.2v1.2h-1.2zM642.0 828.3h1.2v1.2h-1.2zM644.1 829.6h1.2v1.2h-1.2zM646.5 827.7h1.2v1.2h-1.2zM648.4 823.0h1.2v1.2h-1.2zM652.2 828.6h1.2v1.2h-1.2zM655.5 822.4h1.2v1.2h-1.2zM657.1 823.5h1.2v1.2h-1.2zM659.1 824.7h1.2v1.2h-1.2zM661.5 822.4h1.2v1.2h-1.2zM663.8 827.7h1.2v1.2h-1.2zM665.8 829.6h1.2v1.2h-1.2zM668.7 828.4h1.2v1.2h-1.2zM670.8 825.9h1.2v1.2h-1.2zM674.0 825.1h1.2v1.2h-1.2zM675.5 829.5h1.2v1.2h-1.2zM679.0 824.6h1.2v1.2h-1.2zM680.6 829.7h1.2v1.2h-1.2zM683.6 822.4h1.2v1.2h-1.2zM685.7 823.0h1.2v1.2h-1.2zM689.2 823.9h1.2v1.2h-1.2zM693.0 828.7h1.2v1.2h-1.2zM694.7 828.3h1.2v1.2h-1.2zM697.2 828.7h1.2v1.2h-1.2zM700.8 824.5h1.2v1.2h-1.2zM702.5 830.5h1.2v1.2h-1.2zM705.0 830.4h1.2v1.2h-1.2zM708.3 828.6h1.2v1.2h-1.2zM711.8 827.7h1.2v1.2h-1.2zM714.5 822.5h1.2v1.2h-1.2zM717.7 825.9h1.2v1.2h-1.2zM720.5 830.4h1.2v1.2h-1.2zM722.3 828.9h1.2v1.2h-1.2zM723.9 828.3h1.2v1.2h-1.2zM727.4 824.4h1.2v1.2h-1.2zM730.3 830.7h1.2v1.2h-1.2zM733.4 826.9h1.2v1.2h-1.2zM735.5 822.5h1.2v1.2h-1.2zM737.9 825.7h1.2v1.2h-1.2zM739.9 824.8h1.2v1.2h-1.2zM741.8 828.4h1.2v1.2h-1.2zM744.9 824.1h1.2v1.2h-1.2zM747.0 826.6h1.2v1.2h-1.2zM749.7 830.4h1.2v1.2h-1.2zM752.0 824.7h1.2v1.2h-1.2zM755.7 823.3h1.2v1.2h-1.2zM758.7 825.0h1.2v1.2h-1.2zM762.2 826.9h1.2v1.2h-1.2zM765.6 823.5h1.2v1.2h-1.2zM768.8 827.4h1.2v1.2h-1.2zM771.4 828.9h1.2v1.2h-1.2zM775.0 823.0h1.2v1.2h-1.2zM777.2 825.2h1.2v1.2h-1.2zM779.2 822.5h1.2v1.2h-1.2zM781.4 823.8h1.2v1.2h-1.2zM784.7 826.0h1.2v1.2h-1.2zM786.5 824.9h1.2v1.2h-1.2zM789.1 825.3h1.2v1.2h-1.2zM791.1 822.6h1.2v1.2h-1.2zM792.6 830.9h1.2v1.2h-1.2zM796.0 822.8h1.2v1.2h-1.2zM799.3 830.8h1.2v1.2h-1.2zM802.2 823.0h1.2v1.2h-1.2zM804.9 825.9h1.2v1.2h-1.2zM806.9 826.9h1.2v1.2h-1.2zM808.4 830.3h1.2v1.2h-1.2zM811.5 827.6h1.2v1.2h-1.2zM815.3 827.9h1.2v1.2h-1.2zM817.5 824.2h1.2v1.2h-1.2zM819.3 822.2h1.2v1.2h-1.2zM822.7 829.6h1.2v1.2h-1.2zM825.0 823.7h1.2v1.2h-1.2zM828.1 829.6h1.2v1.2h-1.2zM831.9 823.5h1.2v1.2h-1.2zM835.4 829.5h1.2v1.2h-1.2zM838.7 824.9h1.2v1.2h-1.2zM840.7 829.4h1.2v1.2h-1.2zM843.0 825.3h1.2v1.2h-1.2zM845.9 825.3h1.2v1.2h-1.2zM849.4 824.2h1.2v1.2h-1.2zM851.0 827.1h1.2v1.2h-1.2zM854.1 829.4h1.2v1.2h-1.2zM857.4 830.1h1.2v1.2h-1.2zM861.2 826.4h1.2v1.2h-1.2zM864.0 823.4h1.2v1.2h-1.2zM866.2 827.2h1.2v1.2h-1.2zM867.9 828.2h1.2v1.2h-1.2zM869.8 826.0h1.2v1.2h-1.2zM873.8 822.8h1.2v1.2h-1.2zM875.4 826.0h1.2v1.2h-1.2zM877.3 828.5h1.2v1.2h-1.2zM878.9 829.6h1.2v1.2h-1.2zM882.5 829.1h1.2v1.2h-1.2zM885.1 824.5h1.2v1.2h-1.2zM888.2 826.6h1.2v1.2h-1.2zM890.8 825.0h1.2v1.2h-1.2zM893.4 828.0h1.2v1.2h-1.2zM896.9 830.1h1.2v1.2h-1.2zM898.8 824.7h1.2v1.2h-1.2zM901.4 827.1h1.2v1.2h-1.2zM903.8 823.8h1.2v1.2h-1.2zM905.5 824.9h1.2v1.2h-1.2zM908.2 830.7h1.2v1.2h-1.2zM911.9 829.8h1.2v1.2h-1.2zM915.9 830.7h1.2v1.2h-1.2zM918.9 829.3h1.2v1.2h-1.2zM920.6 828.1h1.2v1.2h-1.2zM923.6 824.7h1.2v1.2h-1.2zM926.5 830.6h1.2v1.2h-1.2zM929.2 827.8h1.2v1.2h-1.2zM931.5 825.1h1.2v1.2h-1.2zM935.2 822.3h1.2v1.2h-1.2zM937.2 828.1h1.2v1.2h-1.2zM939.8 822.8h1.2v1.2h-1.2zM942.9 825.3h1.2v1.2h-1.2zM945.9 825.7h1.2v1.2h-1.2zM948.7 827.1h1.2v1.2h-1.2zM951.2 823.0h1.2v1.2h-1.2zM953.2 830.0h1.2v1.2h-1.2zM956.0 823.0h1.2v1.2h-1.2zM959.7 824.3h1.2v1.2h-1.2zM961.4 826.8h1.2v1.2h-1.2zM963.5 826.4h1.2v1.2h-1.2zM966.4 824.0h1.2v1.2h-1.2zM969.4 823.0h1.2v1.2h-1.2zM972.1 827.3h1.2v1.2h-1.2zM973.9 825.7h1.2v1.2h-1.2zM975.5 826.0h1.2v1.2h-1.2zM979.2 827.0h1.2v1.2h-1.2zM982.5 828.8h1.2v1.2h-1.2zM984.3 830.9h1.2v1.2h-1.2zM987.6 822.9h1.2v1.2h-1.2zM991.1 825.5h1.2v1.2h-1.2zM993.1 830.6h1.2v1.2h-1.2zM996.0 829.0h1.2v1.2h-1.2zM997.8 829.0h1.2v1.2h-1.2zM999.5 824.1h1.2v1.2h-1.2zM1001.9 822.1h1.2v1.2h-1.2zM1004.9 823.9h1.2v1.2h-1.2zM1007.1 828.4h1.2v1.2h-1.2zM1009.7 830.0h1.2v1.2h-1.2zM1012.8 829.8h1.2v1.2h-1.2zM1015.7 830.3h1.2v1.2h-1.2zM1019.3 823.5h1.2v1.2h-1.2zM1022.7 825.1h1.2v1.2h-1.2zM1026.1 828.1h1.2v1.2h-1.2zM1029.7 823.1h1.2v1.2h-1.2zM1032.1 828.6h1.2v1.2h-1.2zM1036.0 828.5h1.2v1.2h-1.2zM1037.6 827.4h1.2v1.2h-1.2zM1039.3 826.9h1.2v1.2h-1.2zM1042.8 823.0h1.2v1.2h-1.2zM1046.7 828.1h1.2v1.2h-1.2zM1048.8 823.7h1.2v1.2h-1.2zM1051.4 829.5h1.2v1.2h-1.2zM1054.4 823.0h1.2v1.2h-1.2zM1055.9 823.0h1.2v1.2h-1.2zM1059.4 823.7h1.2v1.2h-1.2zM1062.3 824.6h1.2v1.2h-1.2zM1065.5 825.4h1.2v1.2h-1.2zM1067.4 829.9h1.2v1.2h-1.2zM1070.2 828.2h1.2v1.2h-1.2zM1073.7 830.5h1.2v1.2h-1.2zM1075.3 825.1h1.2v1.2h-1.2zM1077.2 826.5h1.2v1.2h-1.2zM1080.8 829.2h1.2v1.2h-1.2zM1082.4 823.6h1.2v1.2h-1.2zM1086.0 828.1h1.2v1.2h-1.2zM1088.5 826.3h1.2v1.2h-1.2zM1090.4 829.6h1.2v1.2h-1.2zM1092.8 829.9h1.2v1.2h-1.2z" fill="#3a3a3a"/><path d="M2.5 8.0h1.3v1.3h-1.3zM3.0 11.9h1.3v1.3h-1.3zM2.8 15.3h1.3v1.3h-1.3zM2.1 20.5h1.3v1.3h-1.3zM2.1 26.6h1.3v1.3h-1.3zM2.1 32.2h1.3v1.3h-1.3zM2.6 35.7h1.3v1.3h-1.3zM2.2 43.7h1.3v1.3h-1.3zM2.9 48.0h1.3v1.3h-1.3zM2.9 56.7h1.3v1.3h-1.3zM3.5 62.1h1.3v1.3h-1.3zM3.3 65.4h1.3v1.3h-1.3zM2.2 70.1h1.3v1.3h-1.3zM2.5 73.8h1.3v1.3h-1.3zM2.3 81.7h1.3v1.3h-1.3zM3.0 88.2h1.3v1.3h-1.3zM2.8 93.4h1.3v1.3h-1.3zM2.1 96.8h1.3v1.3h-1.3zM3.0 101.0h1.3v1.3h-1.3zM2.5 106.6h1.3v1.3h-1.3zM2.7 113.1h1.3v1.3h-1.3zM3.2 117.9h1.3v1.3h-1.3zM2.4 125.1h1.3v1.3h-1.3zM2.8 131.6h1.3v1.3h-1.3zM3.1 139.8h1.3v1.3h-1.3zM3.5 144.5h1.3v1.3h-1.3zM2.6 148.3h1.3v1.3h-1.3zM2.2 155.8h1.3v1.3h-1.3zM2.1 161.7h1.3v1.3h-1.3zM3.1 168.7h1.3v1.3h-1.3zM3.3 175.2h1.3v1.3h-1.3zM3.0 180.1h1.3v1.3h-1.3zM2.9 186.6h1.3v1.3h-1.3zM3.3 192.4h1.3v1.3h-1.3zM2.7 201.0h1.3v1.3h-1.3zM2.1 208.0h1.3v1.3h-1.3zM3.0 215.2h1.3v1.3h-1.3zM3.2 224.2h1.3v1.3h-1.3zM2.6 228.9h1.3v1.3h-1.3zM2.0 235.9h1.3v1.3h-1.3zM2.3 241.7h1.3v1.3h-1.3zM2.1 245.4h1.3v1.3h-1.3zM2.2 253.0h1.3v1.3h-1.3zM2.6 257.5h1.3v1.3h-1.3zM2.1 265.7h1.3v1.3h-1.3zM2.8 271.4h1.3v1.3h-1.3zM3.2 279.7h1.3v1.3h-1.3zM2.4 287.9h1.3v1.3h-1.3zM2.5 293.4h1.3v1.3h-1.3zM3.4 301.7h1.3v1.3h-1.3zM2.3 305.6h1.3v1.3h-1.3zM2.4 310.0h1.3v1.3h-1.3zM2.9 315.9h1.3v1.3h-1.3zM2.0 320.5h1.3v1.3h-1.3zM2.6 326.0h1.3v1.3h-1.3zM3.4 332.4h1.3v1.3h-1.3zM2.8 339.5h1.3v1.3h-1.3zM3.0 346.2h1.3v1.3h-1.3zM3.3 349.5h1.3v1.3h-1.3zM3.3 357.2h1.3v1.3h-1.3zM2.6 365.0h1.3v1.3h-1.3zM2.2 370.4h1.3v1.3h-1.3zM2.1 377.2h1.3v1.3h-1.3zM2.3 380.6h1.3v1.3h-1.3zM2.5 384.6h1.3v1.3h-1.3zM2.0 387.9h1.3v1.3h-1.3zM2.2 391.8h1.3v1.3h-1.3zM2.0 397.0h1.3v1.3h-1.3zM2.9 405.2h1.3v1.3h-1.3zM2.4 409.1h1.3v1.3h-1.3zM2.5 414.2h1.3v1.3h-1.3zM3.3 418.0h1.3v1.3h-1.3zM2.7 426.9h1.3v1.3h-1.3zM2.1 432.8h1.3v1.3h-1.3zM2.5 436.4h1.3v1.3h-1.3zM3.2 441.0h1.3v1.3h-1.3zM2.0 445.0h1.3v1.3h-1.3zM2.8 453.7h1.3v1.3h-1.3zM2.8 457.6h1.3v1.3h-1.3zM2.8 460.7h1.3v1.3h-1.3zM3.3 469.6h1.3v1.3h-1.3zM2.4 476.8h1.3v1.3h-1.3zM2.3 482.0h1.3v1.3h-1.3zM2.8 489.6h1.3v1.3h-1.3zM2.5 497.3h1.3v1.3h-1.3zM3.2 501.6h1.3v1.3h-1.3zM3.3 510.5h1.3v1.3h-1.3zM3.2 518.4h1.3v1.3h-1.3zM2.3 525.8h1.3v1.3h-1.3zM2.5 531.9h1.3v1.3h-1.3zM2.0 535.1h1.3v1.3h-1.3zM2.4 539.8h1.3v1.3h-1.3zM3.4 546.9h1.3v1.3h-1.3zM3.4 552.6h1.3v1.3h-1.3zM3.4 561.5h1.3v1.3h-1.3zM2.3 566.7h1.3v1.3h-1.3zM2.3 571.1h1.3v1.3h-1.3zM2.9 575.3h1.3v1.3h-1.3zM3.3 583.7h1.3v1.3h-1.3zM3.0 589.6h1.3v1.3h-1.3zM2.1 597.4h1.3v1.3h-1.3zM3.4 604.3h1.3v1.3h-1.3zM3.1 612.0h1.3v1.3h-1.3zM2.3 617.9h1.3v1.3h-1.3zM2.5 625.6h1.3v1.3h-1.3zM3.5 633.4h1.3v1.3h-1.3zM2.6 638.8h1.3v1.3h-1.3zM3.1 647.5h1.3v1.3h-1.3zM2.2 651.5h1.3v1.3h-1.3zM3.4 655.4h1.3v1.3h-1.3zM2.2 663.3h1.3v1.3h-1.3zM3.5 671.2h1.3v1.3h-1.3zM2.5 678.2h1.3v1.3h-1.3zM2.2 684.5h1.3v1.3h-1.3zM3.5 687.6h1.3v1.3h-1.3zM2.8 694.4h1.3v1.3h-1.3zM2.7 703.1h1.3v1.3h-1.3zM3.2 711.3h1.3v1.3h-1.3zM2.4 715.5h1.3v1.3h-1.3zM2.4 720.3h1.3v1.3h-1.3zM2.4 726.8h1.3v1.3h-1.3zM2.2 732.3h1.3v1.3h-1.3zM2.5 740.8h1.3v1.3h-1.3zM2.9 746.5h1.3v1.3h-1.3zM2.6 755.0h1.3v1.3h-1.3zM2.8 763.5h1.3v1.3h-1.3zM2.8 769.7h1.3v1.3h-1.3zM2.7 772.8h1.3v1.3h-1.3zM2.0 776.9h1.3v1.3h-1.3zM2.3 784.7h1.3v1.3h-1.3zM3.1 790.5h1.3v1.3h-1.3zM2.5 796.9h1.3v1.3h-1.3zM2.8 803.0h1.3v1.3h-1.3zM2.2 810.7h1.3v1.3h-1.3zM2.4 817.0h1.3v1.3h-1.3zM3.2 821.7h1.3v1.3h-1.3zM1098.9 10.0h1.3v1.3h-1.3zM1098.7 15.0h1.3v1.3h-1.3zM1098.8 18.0h1.3v1.3h-1.3zM1099.6 23.1h1.3v1.3h-1.3zM1099.7 26.9h1.3v1.3h-1.3zM1098.9 31.1h1.3v1.3h-1.3zM1099.5 39.0h1.3v1.3h-1.3zM1098.6 44.6h1.3v1.3h-1.3zM1098.9 50.5h1.3v1.3h-1.3zM1098.7 59.0h1.3v1.3h-1.3zM1099.6 64.2h1.3v1.3h-1.3zM1099.0 67.4h1.3v1.3h-1.3zM1099.4 75.2h1.3v1.3h-1.3zM1098.5 78.5h1.3v1.3h-1.3zM1099.6 81.8h1.3v1.3h-1.3zM1099.4 86.4h1.3v1.3h-1.3zM1098.9 94.8h1.3v1.3h-1.3zM1099.6 99.4h1.3v1.3h-1.3zM1098.8 106.1h1.3v1.3h-1.3zM1098.9 113.4h1.3v1.3h-1.3zM1098.5 118.1h1.3v1.3h-1.3zM1099.6 125.6h1.3v1.3h-1.3zM1099.6 132.4h1.3v1.3h-1.3zM1098.8 135.5h1.3v1.3h-1.3zM1099.6 141.4h1.3v1.3h-1.3zM1099.0 150.1h1.3v1.3h-1.3zM1099.0 154.6h1.3v1.3h-1.3zM1099.6 160.6h1.3v1.3h-1.3zM1099.5 164.7h1.3v1.3h-1.3zM1099.5 172.1h1.3v1.3h-1.3zM1099.2 179.8h1.3v1.3h-1.3zM1098.9 184.7h1.3v1.3h-1.3zM1099.4 189.9h1.3v1.3h-1.3zM1098.7 193.4h1.3v1.3h-1.3zM1098.8 200.9h1.3v1.3h-1.3zM1098.5 204.3h1.3v1.3h-1.3zM1098.9 210.6h1.3v1.3h-1.3zM1099.6 219.5h1.3v1.3h-1.3zM1098.8 228.4h1.3v1.3h-1.3zM1098.6 231.9h1.3v1.3h-1.3zM1099.4 237.9h1.3v1.3h-1.3zM1098.8 243.6h1.3v1.3h-1.3zM1099.2 249.1h1.3v1.3h-1.3zM1099.4 256.1h1.3v1.3h-1.3zM1099.3 264.2h1.3v1.3h-1.3zM1099.5 267.9h1.3v1.3h-1.3zM1099.2 272.7h1.3v1.3h-1.3zM1099.4 277.9h1.3v1.3h-1.3zM1098.8 282.1h1.3v1.3h-1.3zM1098.7 286.6h1.3v1.3h-1.3zM1099.2 294.9h1.3v1.3h-1.3zM1099.0 299.9h1.3v1.3h-1.3zM1099.1 308.8h1.3v1.3h-1.3zM1099.5 313.2h1.3v1.3h-1.3zM1099.7 320.1h1.3v1.3h-1.3zM1099.1 323.7h1.3v1.3h-1.3zM1099.5 331.7h1.3v1.3h-1.3zM1098.5 340.1h1.3v1.3h-1.3zM1098.6 344.9h1.3v1.3h-1.3zM1099.7 349.0h1.3v1.3h-1.3zM1099.6 355.5h1.3v1.3h-1.3zM1099.5 360.8h1.3v1.3h-1.3zM1098.8 366.5h1.3v1.3h-1.3zM1099.6 374.1h1.3v1.3h-1.3zM1099.2 377.8h1.3v1.3h-1.3zM1098.8 384.5h1.3v1.3h-1.3zM1098.7 389.7h1.3v1.3h-1.3zM1098.8 393.9h1.3v1.3h-1.3zM1099.3 400.5h1.3v1.3h-1.3zM1098.5 404.7h1.3v1.3h-1.3zM1099.3 409.7h1.3v1.3h-1.3zM1098.9 413.8h1.3v1.3h-1.3zM1099.5 418.0h1.3v1.3h-1.3zM1098.6 424.3h1.3v1.3h-1.3zM1099.0 427.9h1.3v1.3h-1.3zM1099.3 434.2h1.3v1.3h-1.3zM1098.7 437.8h1.3v1.3h-1.3zM1099.0 445.0h1.3v1.3h-1.3zM1098.9 449.7h1.3v1.3h-1.3zM1098.9 458.4h1.3v1.3h-1.3zM1098.9 464.8h1.3v1.3h-1.3zM1099.5 470.3h1.3v1.3h-1.3zM1098.9 479.2h1.3v1.3h-1.3zM1099.4 483.4h1.3v1.3h-1.3zM1098.5 487.7h1.3v1.3h-1.3zM1099.0 496.1h1.3v1.3h-1.3zM1099.0 504.0h1.3v1.3h-1.3zM1099.1 512.3h1.3v1.3h-1.3zM1098.5 516.3h1.3v1.3h-1.3zM1099.3 522.6h1.3v1.3h-1.3zM1098.6 531.0h1.3v1.3h-1.3zM1098.9 537.8h1.3v1.3h-1.3zM1098.7 543.8h1.3v1.3h-1.3zM1099.1 548.5h1.3v1.3h-1.3zM1098.6 557.0h1.3v1.3h-1.3zM1099.5 563.0h1.3v1.3h-1.3zM1098.7 571.8h1.3v1.3h-1.3zM1099.6 575.5h1.3v1.3h-1.3zM1099.1 584.4h1.3v1.3h-1.3zM1099.6 587.7h1.3v1.3h-1.3zM1099.6 593.0h1.3v1.3h-1.3zM1099.5 599.8h1.3v1.3h-1.3zM1099.4 603.7h1.3v1.3h-1.3zM1099.0 608.1h1.3v1.3h-1.3zM1099.5 616.1h1.3v1.3h-1.3zM1098.8 620.2h1.3v1.3h-1.3zM1099.1 625.6h1.3v1.3h-1.3zM1098.6 630.9h1.3v1.3h-1.3zM1099.4 635.4h1.3v1.3h-1.3zM1098.5 643.8h1.3v1.3h-1.3zM1099.4 650.2h1.3v1.3h-1.3zM1099.5 653.4h1.3v1.3h-1.3zM1099.2 657.1h1.3v1.3h-1.3zM1099.3 663.4h1.3v1.3h-1.3zM1099.0 668.2h1.3v1.3h-1.3zM1099.0 674.7h1.3v1.3h-1.3zM1099.0 681.7h1.3v1.3h-1.3zM1098.5 687.3h1.3v1.3h-1.3zM1099.1 694.0h1.3v1.3h-1.3zM1099.4 698.5h1.3v1.3h-1.3zM1099.0 706.1h1.3v1.3h-1.3zM1099.1 710.2h1.3v1.3h-1.3zM1098.7 713.9h1.3v1.3h-1.3zM1098.6 719.4h1.3v1.3h-1.3zM1099.1 725.1h1.3v1.3h-1.3zM1099.3 728.3h1.3v1.3h-1.3zM1099.4 731.8h1.3v1.3h-1.3zM1099.1 739.5h1.3v1.3h-1.3zM1099.1 742.8h1.3v1.3h-1.3zM1099.6 748.1h1.3v1.3h-1.3zM1099.5 751.9h1.3v1.3h-1.3zM1099.4 760.9h1.3v1.3h-1.3zM1098.7 768.8h1.3v1.3h-1.3zM1099.1 777.7h1.3v1.3h-1.3zM1099.6 786.4h1.3v1.3h-1.3zM1099.4 790.4h1.3v1.3h-1.3zM1098.6 799.0h1.3v1.3h-1.3zM1099.4 804.1h1.3v1.3h-1.3zM1099.6 808.0h1.3v1.3h-1.3zM1099.5 812.7h1.3v1.3h-1.3zM1099.1 816.5h1.3v1.3h-1.3zM1098.7 825.1h1.3v1.3h-1.3zM8.0 835.7h1.3v1.3h-1.3zM12.3 834.7h1.3v1.3h-1.3zM16.0 835.5h1.3v1.3h-1.3zM19.3 835.4h1.3v1.3h-1.3zM23.0 835.5h1.3v1.3h-1.3zM28.5 835.6h1.3v1.3h-1.3zM35.8 834.0h1.3v1.3h-1.3zM43.0 835.4h1.3v1.3h-1.3zM48.9 836.0h1.3v1.3h-1.3zM56.1 835.1h1.3v1.3h-1.3zM61.2 836.9h1.3v1.3h-1.3zM64.5 835.9h1.3v1.3h-1.3zM70.7 834.1h1.3v1.3h-1.3zM76.8 836.0h1.3v1.3h-1.3zM84.4 835.0h1.3v1.3h-1.3zM92.3 835.5h1.3v1.3h-1.3zM97.7 836.7h1.3v1.3h-1.3zM100.9 836.2h1.3v1.3h-1.3zM107.0 835.0h1.3v1.3h-1.3zM114.4 835.1h1.3v1.3h-1.3zM119.7 835.6h1.3v1.3h-1.3zM126.6 834.6h1.3v1.3h-1.3zM131.8 835.3h1.3v1.3h-1.3zM137.5 836.5h1.3v1.3h-1.3zM142.0 836.5h1.3v1.3h-1.3zM147.0 835.5h1.3v1.3h-1.3zM151.4 835.5h1.3v1.3h-1.3zM159.2 836.0h1.3v1.3h-1.3zM166.2 835.0h1.3v1.3h-1.3zM170.8 834.9h1.3v1.3h-1.3zM176.7 835.9h1.3v1.3h-1.3zM183.6 834.1h1.3v1.3h-1.3zM190.3 836.7h1.3v1.3h-1.3zM196.0 834.1h1.3v1.3h-1.3zM200.5 834.0h1.3v1.3h-1.3zM204.4 836.8h1.3v1.3h-1.3zM210.5 836.0h1.3v1.3h-1.3zM217.4 836.7h1.3v1.3h-1.3zM223.5 835.9h1.3v1.3h-1.3zM229.6 836.1h1.3v1.3h-1.3zM235.6 836.0h1.3v1.3h-1.3zM239.7 836.0h1.3v1.3h-1.3zM244.9 836.3h1.3v1.3h-1.3zM248.5 834.5h1.3v1.3h-1.3zM251.6 836.3h1.3v1.3h-1.3zM259.2 836.0h1.3v1.3h-1.3zM264.1 836.5h1.3v1.3h-1.3zM271.0 835.7h1.3v1.3h-1.3zM275.3 834.9h1.3v1.3h-1.3zM280.4 835.0h1.3v1.3h-1.3zM285.5 835.9h1.3v1.3h-1.3zM293.2 834.2h1.3v1.3h-1.3zM299.0 834.1h1.3v1.3h-1.3zM302.6 836.4h1.3v1.3h-1.3zM308.5 836.8h1.3v1.3h-1.3zM313.7 834.0h1.3v1.3h-1.3zM318.7 835.8h1.3v1.3h-1.3zM326.4 836.9h1.3v1.3h-1.3zM331.7 835.2h1.3v1.3h-1.3zM335.3 835.9h1.3v1.3h-1.3zM339.3 834.5h1.3v1.3h-1.3zM342.4 834.0h1.3v1.3h-1.3zM348.8 834.4h1.3v1.3h-1.3zM356.6 834.3h1.3v1.3h-1.3zM364.0 834.4h1.3v1.3h-1.3zM367.1 836.2h1.3v1.3h-1.3zM371.3 836.2h1.3v1.3h-1.3zM375.2 834.2h1.3v1.3h-1.3zM382.1 836.1h1.3v1.3h-1.3zM389.4 836.2h1.3v1.3h-1.3zM392.8 835.9h1.3v1.3h-1.3zM399.3 835.4h1.3v1.3h-1.3zM407.0 834.8h1.3v1.3h-1.3zM414.8 836.2h1.3v1.3h-1.3zM417.9 834.0h1.3v1.3h-1.3zM424.1 836.5h1.3v1.3h-1.3zM427.5 834.9h1.3v1.3h-1.3zM434.2 834.5h1.3v1.3h-1.3zM441.5 835.5h1.3v1.3h-1.3zM444.8 835.1h1.3v1.3h-1.3zM450.7 835.3h1.3v1.3h-1.3zM457.1 834.4h1.3v1.3h-1.3zM464.0 835.1h1.3v1.3h-1.3zM470.3 835.9h1.3v1.3h-1.3zM475.4 835.2h1.3v1.3h-1.3zM482.3 836.8h1.3v1.3h-1.3zM489.2 835.7h1.3v1.3h-1.3zM493.7 834.2h1.3v1.3h-1.3zM501.5 836.1h1.3v1.3h-1.3zM508.7 835.0h1.3v1.3h-1.3zM514.7 836.9h1.3v1.3h-1.3zM521.9 835.8h1.3v1.3h-1.3zM526.4 835.3h1.3v1.3h-1.3zM533.8 835.1h1.3v1.3h-1.3zM540.3 835.8h1.3v1.3h-1.3zM547.7 836.4h1.3v1.3h-1.3zM552.2 834.0h1.3v1.3h-1.3zM556.5 835.3h1.3v1.3h-1.3zM562.4 836.4h1.3v1.3h-1.3zM569.9 834.1h1.3v1.3h-1.3zM577.0 836.4h1.3v1.3h-1.3zM584.4 835.7h1.3v1.3h-1.3zM588.7 836.6h1.3v1.3h-1.3zM595.8 836.1h1.3v1.3h-1.3zM603.3 835.0h1.3v1.3h-1.3zM606.8 835.7h1.3v1.3h-1.3zM613.7 834.6h1.3v1.3h-1.3zM620.5 836.8h1.3v1.3h-1.3zM624.7 835.8h1.3v1.3h-1.3zM631.0 835.4h1.3v1.3h-1.3zM635.1 834.8h1.3v1.3h-1.3zM641.8 836.4h1.3v1.3h-1.3zM647.1 834.3h1.3v1.3h-1.3zM654.2 836.3h1.3v1.3h-1.3zM658.3 835.7h1.3v1.3h-1.3zM665.8 836.7h1.3v1.3h-1.3zM671.4 835.4h1.3v1.3h-1.3zM677.4 834.6h1.3v1.3h-1.3zM681.3 834.5h1.3v1.3h-1.3zM687.8 835.1h1.3v1.3h-1.3zM693.7 835.2h1.3v1.3h-1.3zM699.2 834.4h1.3v1.3h-1.3zM702.5 837.0h1.3v1.3h-1.3zM707.3 834.3h1.3v1.3h-1.3zM713.5 836.4h1.3v1.3h-1.3zM717.3 835.8h1.3v1.3h-1.3zM722.0 835.6h1.3v1.3h-1.3zM725.1 834.1h1.3v1.3h-1.3zM733.1 836.6h1.3v1.3h-1.3zM738.5 835.7h1.3v1.3h-1.3zM742.8 836.3h1.3v1.3h-1.3zM747.9 836.8h1.3v1.3h-1.3zM754.8 836.5h1.3v1.3h-1.3zM762.6 834.8h1.3v1.3h-1.3zM765.8 834.6h1.3v1.3h-1.3zM769.7 834.3h1.3v1.3h-1.3zM772.9 835.7h1.3v1.3h-1.3zM780.3 835.4h1.3v1.3h-1.3zM788.0 836.7h1.3v1.3h-1.3zM791.3 835.8h1.3v1.3h-1.3zM796.3 834.4h1.3v1.3h-1.3zM804.1 834.8h1.3v1.3h-1.3zM810.0 835.9h1.3v1.3h-1.3zM817.7 836.0h1.3v1.3h-1.3zM822.7 835.3h1.3v1.3h-1.3zM826.5 836.9h1.3v1.3h-1.3zM834.5 834.7h1.3v1.3h-1.3zM837.7 834.8h1.3v1.3h-1.3zM842.4 836.7h1.3v1.3h-1.3zM849.9 836.5h1.3v1.3h-1.3zM853.2 836.4h1.3v1.3h-1.3zM859.7 835.9h1.3v1.3h-1.3zM867.6 834.2h1.3v1.3h-1.3zM871.4 836.3h1.3v1.3h-1.3zM879.1 836.0h1.3v1.3h-1.3zM883.6 835.8h1.3v1.3h-1.3zM890.3 834.3h1.3v1.3h-1.3zM895.0 834.8h1.3v1.3h-1.3zM898.6 835.4h1.3v1.3h-1.3zM902.4 834.7h1.3v1.3h-1.3zM906.1 836.0h1.3v1.3h-1.3zM909.2 836.2h1.3v1.3h-1.3zM913.2 834.1h1.3v1.3h-1.3zM920.8 834.7h1.3v1.3h-1.3zM928.5 836.6h1.3v1.3h-1.3zM935.9 834.4h1.3v1.3h-1.3zM941.2 834.3h1.3v1.3h-1.3zM948.8 836.5h1.3v1.3h-1.3zM955.0 835.4h1.3v1.3h-1.3zM959.7 836.5h1.3v1.3h-1.3zM965.0 835.9h1.3v1.3h-1.3zM968.8 834.7h1.3v1.3h-1.3zM972.0 836.1h1.3v1.3h-1.3zM977.8 834.4h1.3v1.3h-1.3zM985.2 834.8h1.3v1.3h-1.3zM990.2 834.5h1.3v1.3h-1.3zM994.6 836.5h1.3v1.3h-1.3zM999.3 834.5h1.3v1.3h-1.3zM1004.7 835.0h1.3v1.3h-1.3zM1012.2 834.3h1.3v1.3h-1.3zM1020.1 834.2h1.3v1.3h-1.3zM1027.6 836.0h1.3v1.3h-1.3zM1031.6 835.4h1.3v1.3h-1.3zM1036.1 834.8h1.3v1.3h-1.3zM1040.1 835.1h1.3v1.3h-1.3zM1048.0 837.0h1.3v1.3h-1.3zM1055.7 834.3h1.3v1.3h-1.3zM1060.1 836.7h1.3v1.3h-1.3zM1063.4 836.2h1.3v1.3h-1.3zM1067.9 836.9h1.3v1.3h-1.3zM1070.9 836.4h1.3v1.3h-1.3zM1075.7 834.4h1.3v1.3h-1.3zM1078.7 836.5h1.3v1.3h-1.3zM1084.3 834.6h1.3v1.3h-1.3zM1089.5 836.7h1.3v1.3h-1.3zM1093.6 835.7h1.3v1.3h-1.3z" fill="#e8e8e8"/></svg><div id="win"><div id="in">
<div class="r" style="left:0;top:0;width:1102px;height:65px;background:#3888cd"></div>
<div class="r" style="left:145px;top:36px;width:87px;height:29px;background:#f5f5f5"></div>
<svg class="r" style="left:14px;top:6px" width="24" height="24" viewBox="0 0 24 24">
<g fill="#6a7fcf" opacity="0.75"><circle cx="6" cy="8.3" r="2.7"/><circle cx="17.4" cy="5.4" r="2.7"/><circle cx="15.3" cy="13.3" r="2.7"/><circle cx="4.9" cy="17.9" r="2.7"/></g>
<path d="M5.5 15.8 Q6 10.6 10 10.3 Q13.5 10 16 8.8" stroke="#e89a48" stroke-width="1.7" fill="none"/></svg>
<div class="r" style="left:41.5px;top:11px;width:1.5px;height:17px;background:#a9c9ea"></div>
<svg class="r" style="left:64px;top:14px" width="13" height="10" viewBox="0 0 13 10"><path d="M3 1.5H10" stroke="#cfe0f3" stroke-width="1.3"/><path d="M2.5 4.5L6.5 8.5L10.5 4.5Z" fill="#dfe9f5"/><path d="M4.5 4.8L6.5 6.8L8.5 4.8Z" fill="#555"/></svg>
<div class="t" style="left:465px;top:8.0px;font-size:17.5px;color:#eef4fb;font-weight:normal;letter-spacing:0px;transform:scaleX(0.9444);transform-origin:0 0;">DataFlow2</div>
<svg class="r" style="left:930px;top:8px" width="155" height="24" viewBox="930 8 155 24">
<g fill="none" stroke="#fff">
<path d="M939 11.5H951.5L948 25.5H935.5Z" fill="#fff" stroke="none"/>
<path d="M936 26.5H948.5L952.5 13" stroke="#dfeaf6" stroke-width="1.2"/>
<path d="M941.5 14.5H948.5M941 17H948" stroke="#3a87cd" stroke-width="1.1"/>
</g>
<circle cx="980" cy="19" r="8" fill="#fff"/>
<path d="M978.3 16.8H981V23.5H982.3M977.8 23.5H982.3" stroke="#3a87cd" stroke-width="1.9" fill="none"/>
<circle cx="980.5" cy="13.8" r="1.4" fill="#3a87cd"/>
<path d="M1007 20.8H1017.5" stroke="#fff" stroke-width="2.3"/>
<rect x="1036" y="16.3" width="10.6" height="9.8" fill="none" stroke="#fff" stroke-width="1.4"/>
<path d="M1036 17.6H1046.6" stroke="#fff" stroke-width="2.6"/>
<path d="M1066.8 16L1076.5 25.8M1076.5 16L1066.8 25.8" stroke="#fff" stroke-width="2"/>
</svg>
<div class="t" style="left:33.9px;top:43.1px;font-size:14.5px;color:#f2f6fb;font-weight:normal;letter-spacing:0px;transform:scaleX(0.8774);transform-origin:0 0;">File</div>
<div class="t" style="left:97.8px;top:43.1px;font-size:14.5px;color:#f2f6fb;font-weight:normal;letter-spacing:0px;transform:scaleX(0.9632);transform-origin:0 0;">Data</div>
<div class="t" style="left:160.5px;top:43.1px;font-size:14.5px;color:#3f86c8;font-weight:normal;letter-spacing:0px;transform:scaleX(0.9817);transform-origin:0 0;">Learning</div>
<div class="t" style="left:249.7px;top:43.1px;font-size:14.5px;color:#f2f6fb;font-weight:normal;letter-spacing:0px;transform:scaleX(0.9520);transform-origin:0 0;">Analysis</div>
<div class="t" style="left:62px;top:80.5px;font-size:14px;color:#3a3a3a;font-weight:normal;letter-spacing:0px;transform:scaleX(0.9715);transform-origin:0 0;">Add</div>
<div class="t" style="left:62px;top:98.5px;font-size:14px;color:#3a3a3a;font-weight:normal;letter-spacing:0px;transform:scaleX(0.9509);transform-origin:0 0;">Group</div>
<div class="t" style="left:149.6px;top:80.5px;font-size:14px;color:#3a3a3a;font-weight:normal;letter-spacing:0px;transform:scaleX(0.9835);transform-origin:0 0;">Add</div>
<div class="t" style="left:149.6px;top:98.5px;font-size:14px;color:#3a3a3a;font-weight:normal;letter-spacing:0px;transform:scaleX(1.0071);transform-origin:0 0;">Model</div>
<div class="t" style="left:238.3px;top:89.9px;font-size:14px;color:#3a3a3a;font-weight:normal;letter-spacing:0px;transform:scaleX(0.9295);transform-origin:0 0;">Clone</div>
<div class="t" style="left:323.1px;top:89.6px;font-size:14px;color:#3a3a3a;font-weight:normal;letter-spacing:0px;transform:scaleX(0.9054);transform-origin:0 0;">Remove</div>
<div class="t" style="left:421.8px;top:89.6px;font-size:14px;color:#3a3a3a;font-weight:normal;letter-spacing:0px;transform:scaleX(0.9309);transform-origin:0 0;">Properties</div>
<div class="t" style="left:541.4px;top:89.6px;font-size:14px;color:#3a3a3a;font-weight:normal;letter-spacing:0px;transform:scaleX(0.8769);transform-origin:0 0;">Learn</div>
<div class="r" style="left:280px;top:70px;width:1.5px;height:52px;background:#dcdcdc"></div>
<div class="r" style="left:378.8px;top:70px;width:1.5px;height:52px;background:#dcdcdc"></div>
<div class="r" style="left:494.5px;top:70px;width:1.5px;height:52px;background:#dcdcdc"></div>
<div class="r" style="left:584.3px;top:70px;width:1.5px;height:52px;background:#dcdcdc"></div>
<svg class="r" style="left:20px;top:72px" width="580" height="48" viewBox="20 72 580 48">
<rect x="27.6" y="83.2" width="8" height="23.6" fill="#4f9e7a"/>
<rect x="27.6" y="83.2" width="23.7" height="5.6" fill="#4f9e7a"/>
<rect x="35.6" y="88.8" width="15.4" height="17.8" fill="#fff"/>
<path d="M35.6 93.2H51M35.6 97.6H51M35.6 102H45" stroke="#a9a9a9" stroke-width="0.9"/>
<path d="M43.2 88.8V106" stroke="#c4c4c4" stroke-width="0.9"/>
<path d="M51 88.8V97M35.6 106.6H42" stroke="#777" stroke-width="1"/>
<path d="M29.8 90.8H33.4M29.8 95.3H33.4M29.8 99.8H33.4M29.8 104.3H33.4M38.3 86H40.5M46.5 86H49" stroke="#bfe0cf" stroke-width="1.4"/>
<path d="M47.7 97.2V109.4M41.4 103.1H53.8" stroke="#f5f5f5" stroke-width="6"/>
<path d="M47.7 97.2V109.4M41.4 103.1H53.8" stroke="#5bb58b" stroke-width="3.6"/>
<polygon points="138.59,88.21 140.24,88.35 140.24,90.05 138.59,90.19 137.97,91.68 139.04,92.94 137.84,94.14 136.58,93.07 135.09,93.69 134.95,95.34 133.25,95.34 133.11,93.69 131.62,93.07 130.36,94.14 129.16,92.94 130.23,91.68 129.61,90.19 127.96,90.05 127.96,88.35 129.61,88.21 130.23,86.72 129.16,85.46 130.36,84.26 131.62,85.33 133.11,84.71 133.25,83.06 134.95,83.06 135.09,84.71 136.58,85.33 137.84,84.26 139.04,85.46 137.97,86.72" fill="#8a8a8a"/><circle cx="134.1" cy="89.2" r="3.91" fill="#8a8a8a"/><circle cx="134.1" cy="89.2" r="2.0" fill="#f5f5f5"/><polygon points="128.89,98.86 130.94,99.03 130.94,100.97 128.89,101.14 128.25,102.91 129.71,104.36 128.46,105.85 126.78,104.66 125.15,105.60 125.34,107.65 123.42,107.99 122.90,106.00 121.05,105.67 119.87,107.36 118.19,106.39 119.06,104.53 117.86,103.09 115.87,103.63 115.21,101.80 117.07,100.94 117.07,99.06 115.21,98.20 115.87,96.37 117.86,96.91 119.06,95.47 118.19,93.61 119.87,92.64 121.05,94.33 122.90,94.00 123.42,92.01 125.34,92.35 125.15,94.40 126.78,95.34 128.46,94.15 129.71,95.64 128.25,97.09" fill="#8a8a8a"/><circle cx="123" cy="100" r="5.10" fill="#8a8a8a"/><circle cx="123" cy="100" r="2.6" fill="#f5f5f5"/>
<path d="M135.3 97V109M129.5 103H141" stroke="#5cb88e" stroke-width="3"/>
<path d="M204.8 84.5H215.5L219.5 88.5V104.5H204.8Z" fill="#fff" stroke="#a8a8a8" stroke-width="1.1"/>
<path d="M207.5 89.6H212M207.5 91.8H212M207.5 94H214.5M207.5 96.2H214.5M207.5 98.4H214.5M207.5 100.6H214.5" stroke="#b3cbe6" stroke-width="1.7"/>
<path d="M214.8 90.5H226L230.8 95.3V110H214.8Z" fill="#fff" stroke="#a4a4a4" stroke-width="1.3" stroke-linejoin="round"/>
<path d="M226 90.5V95.3H230.8" fill="none" stroke="#a0a0a0" stroke-width="1"/>
<path d="M218 95.4H222.5M218 97.6H222.5M218 99.8H228M218 102H228M218 104.2H228M218 106.4H228" stroke="#8fb2da" stroke-width="1.7"/>
<path d="M292.5 87.5L311.5 106.5M311.5 87.5L292.5 106.5" stroke="#d9603c" stroke-width="4.6"/>
<path d="M391.9 85V109M400.9 85V109M410.1 85V109" stroke="#6a6a6a" stroke-width="1.8"/>
<path d="M387 94.3H396M396.5 102H405.5M405 90.5H415" stroke="#4a86c6" stroke-width="2.6"/>
<path d="M512 86.5C515 83 522 82.5 526 84C530 86 531.5 90 531 94C530.5 98 528.5 100 527 102L527 108.4H514V105.5C512 105.5 510 105 509.5 103.5V101L508 100.5L509.5 99L507 96.5L509.5 93C509.5 90 510.5 88 512 86.5Z" fill="#4a80b8"/>
<ellipse cx="521" cy="91.3" rx="7.2" ry="4.8" fill="#fff"/>
<polygon points="523.34,90.79 524.27,90.85 524.27,91.75 523.34,91.81 523.02,92.59 523.63,93.29 522.99,93.93 522.29,93.32 521.51,93.64 521.45,94.57 520.55,94.57 520.49,93.64 519.71,93.32 519.01,93.93 518.37,93.29 518.98,92.59 518.66,91.81 517.73,91.75 517.73,90.85 518.66,90.79 518.98,90.01 518.37,89.31 519.01,88.67 519.71,89.28 520.49,88.96 520.55,88.03 521.45,88.03 521.51,88.96 522.29,89.28 522.99,88.67 523.63,89.31 523.02,90.01" fill="#505050"/><circle cx="521" cy="91.3" r="2.04" fill="#505050"/><circle cx="521" cy="91.3" r="1.0" fill="#fff"/>
</svg>
<div class="r" style="left:12px;top:124px;width:1077px;height:1.8px;background:#f9f9f7"></div><div class="r" style="left:12px;top:125.8px;width:269px;height:2.4px;background:#76a8d4"></div>
<div class="r" style="left:12px;top:128px;width:269px;height:663px;background:#f6f6f6"></div>
<div class="r" style="left:15px;top:128px;width:262.7px;height:313.7px;box-sizing:border-box;border:1.5px solid #e0e0e0;border-right:2px solid #dedede;border-bottom:2px solid #e2e2e2;border-top:none;background:#fff"></div>
<div class="r" style="left:16.5px;top:128.2px;width:259.7px;height:29.3px;background:#f3f3f3"></div><div class="r" style="left:12px;top:128.2px;width:269px;height:2.5px;background:#fbfbf9"></div>
<div class="t" style="left:50.9px;top:136.4px;font-size:14px;color:#303030;font-weight:normal;letter-spacing:0px;transform:scaleX(0.9404);transform-origin:0 0;">DataGroup</div>
<svg class="r" style="left:40px;top:150px" width="50" height="120" viewBox="40 150 50 120">
<path d="M50.5 157V166.3" stroke="#555" stroke-width="1"/>
<rect x="45.5" y="166.3" width="9.5" height="9.5" fill="#fff" stroke="#333" stroke-width="1.3"/>
<path d="M48 171H52.5" stroke="#bbb" stroke-width="0.8"/>
<path d="M55 171H61" stroke="#555" stroke-width="1"/>
<path d="M68 181V266.5" stroke="#777" stroke-width="1" stroke-dasharray="1 1"/>
<path d="M68 194.5H79M68 218H79M68 242.4H79M68 266H79" stroke="#777" stroke-width="1" stroke-dasharray="1 1"/>
</svg>
<div class="t" style="left:66.6px;top:163.5px;font-size:14px;color:#303030;font-weight:normal;letter-spacing:0px;transform:scaleX(0.9891);transform-origin:0 0;">Group-000</div>
<div class="r" style="left:80px;top:205.8px;width:127.4px;height:23.6px;background:#3c86cc"></div>
<div class="t" style="left:85.6px;top:187.4px;font-size:14px;color:#303030;font-weight:normal;letter-spacing:0px;transform:scaleX(0.9121);transform-origin:0 0;">MD_0000, PLS</div>
<div class="t" style="left:85.6px;top:211.0px;font-size:14px;color:#ffffff;font-weight:normal;letter-spacing:0px;transform:scaleX(0.9131);transform-origin:0 0;">MD_0001, RANSAC</div>
<div class="t" style="left:85.6px;top:235.4px;font-size:14px;color:#303030;font-weight:normal;letter-spacing:0px;transform:scaleX(0.9249);transform-origin:0 0;">MD_0002, SVM</div>
<div class="t" style="left:85.6px;top:257.4px;font-size:14px;color:#303030;font-weight:normal;letter-spacing:0px;transform:scaleX(0.9397);transform-origin:0 0;">MD_0003, MLP</div>
<div class="r" style="left:15px;top:446.2px;width:262.7px;height:350px;box-sizing:border-box;border:1.5px solid #e0e0e0;border-right:2px solid #dedede;border-bottom:none;background:#fff"></div>
<div class="t" style="left:34.6px;top:453.1px;font-size:14.4px;color:#202020;font-weight:bold;letter-spacing:0px;transform:scaleX(0.8847);transform-origin:0 0;">Model Settings</div>
<svg class="r" style="left:18px;top:456.3px" width="10" height="10" viewBox="0 0 10 10"><path d="M8 1.5V8.5H1Z" fill="none" stroke="#c4c4c4" stroke-width="0.9"/></svg>
<div class="t" style="left:34.6px;top:476.0px;font-size:14.4px;color:#444;font-weight:normal;letter-spacing:0px;transform:scaleX(0.8794);transform-origin:0 0;">DataPreProcess</div>
<div class="t" style="left:142.7px;top:476.0px;font-size:14.4px;color:#444;font-weight:normal;letter-spacing:0px;transform:scaleX(0.9244);transform-origin:0 0;">Standardization</div>
<div class="t" style="left:34.6px;top:497.1px;font-size:14.4px;color:#444;font-weight:normal;letter-spacing:0px;transform:scaleX(0.9059);transform-origin:0 0;">ErrorThreshold</div>
<div class="t" style="left:142.7px;top:497.1px;font-size:14.4px;color:#444;font-weight:normal;letter-spacing:0px;transform:scaleX(0.7867);transform-origin:0 0;">1</div>
<div class="t" style="left:34.6px;top:518.4px;font-size:14.4px;color:#444;font-weight:normal;letter-spacing:0px;transform:scaleX(0.9165);transform-origin:0 0;">MaxTrials</div>
<div class="t" style="left:142.7px;top:518.4px;font-size:14.4px;color:#444;font-weight:normal;letter-spacing:0px;transform:scaleX(0.9833);transform-origin:0 0;">1000</div>
<div class="t" style="left:34.6px;top:540.3px;font-size:14.4px;color:#444;font-weight:normal;letter-spacing:0px;transform:scaleX(0.9638);transform-origin:0 0;">Probability</div>
<div class="t" style="left:142.7px;top:540.3px;font-size:14.4px;color:#444;font-weight:normal;letter-spacing:0px;transform:scaleX(0.9562);transform-origin:0 0;">0.95</div>
<div class="t" style="left:34.6px;top:561.6px;font-size:14.4px;color:#444;font-weight:normal;letter-spacing:0px;transform:scaleX(0.9240);transform-origin:0 0;">SampleCountM</div>
<div class="t" style="left:142.7px;top:561.6px;font-size:14.4px;color:#444;font-weight:normal;letter-spacing:0px;transform:scaleX(0.9365);transform-origin:0 0;">20</div>
<div class="t" style="left:34.6px;top:583.5px;font-size:14.4px;color:#444;font-weight:normal;letter-spacing:0px;transform:scaleX(0.8915);transform-origin:0 0;">SampleRatio</div>
<div class="t" style="left:142.7px;top:583.5px;font-size:14.4px;color:#444;font-weight:normal;letter-spacing:0px;transform:scaleX(0.9042);transform-origin:0 0;">0.3</div>
<div class="t" style="left:34.6px;top:604.8px;font-size:14.4px;color:#444;font-weight:normal;letter-spacing:0px;transform:scaleX(0.8295);transform-origin:0 0;">UsePCA</div>
<div class="r" style="left:141px;top:607.0px;width:12px;height:11.5px;box-sizing:border-box;border:1px solid #a8a8a8;background:#fff"></div>
<div class="t" style="left:160.8px;top:604.8px;font-size:14.4px;color:#444;font-weight:normal;letter-spacing:0px;transform:scaleX(0.8378);transform-origin:0 0;">False</div>
<div class="t" style="left:34.6px;top:627.6px;font-size:14.4px;color:#202020;font-weight:bold;letter-spacing:0px;transform:scaleX(0.8561);transform-origin:0 0;">PCA options</div>
<svg class="r" style="left:18px;top:630.8px" width="10" height="10" viewBox="0 0 10 10"><path d="M8 1.5V8.5H1Z" fill="none" stroke="#c4c4c4" stroke-width="0.9"/></svg>
<div class="t" style="left:34.6px;top:649.8px;font-size:14.4px;color:#444;font-weight:normal;letter-spacing:0px;transform:scaleX(0.9162);transform-origin:0 0;">PcCount</div>
<div class="t" style="left:142.7px;top:649.8px;font-size:14.4px;color:#444;font-weight:normal;letter-spacing:0px;transform:scaleX(0.8865);transform-origin:0 0;">0</div>
<div class="t" style="left:34.6px;top:672.1px;font-size:14.4px;color:#444;font-weight:normal;letter-spacing:0px;transform:scaleX(0.9449);transform-origin:0 0;">PcCountMetho</div>
<div class="t" style="left:142.7px;top:672.1px;font-size:14.4px;color:#444;font-weight:normal;letter-spacing:0px;transform:scaleX(0.9578);transform-origin:0 0;">Portion</div>
<div class="t" style="left:34.6px;top:693.6px;font-size:14.4px;color:#444;font-weight:normal;letter-spacing:0px;transform:scaleX(0.9478);transform-origin:0 0;">PcProportion</div>
<div class="t" style="left:142.7px;top:693.6px;font-size:14.4px;color:#444;font-weight:normal;letter-spacing:0px;transform:scaleX(0.9649);transform-origin:0 0;">0.9999</div>
<div class="t" style="left:34.6px;top:715.4px;font-size:14.4px;color:#202020;font-weight:bold;letter-spacing:0px;transform:scaleX(0.8430);transform-origin:0 0;">Result</div>
<svg class="r" style="left:18px;top:718.6px" width="10" height="10" viewBox="0 0 10 10"><path d="M8 1.5V8.5H1Z" fill="none" stroke="#c4c4c4" stroke-width="0.9"/></svg>
<div class="t" style="left:34.6px;top:738.1px;font-size:14.4px;color:#444;font-weight:normal;letter-spacing:0px;transform:scaleX(0.9635);transform-origin:0 0;">FitModel</div>
<div class="t" style="left:142.7px;top:738.1px;font-size:14.4px;color:#444;font-weight:normal;letter-spacing:0px;transform:scaleX(0.9332);transform-origin:0 0;">DataFlow.Machi</div>
<svg class="r" style="left:18px;top:741.3px" width="10" height="10" viewBox="0 0 10 10"><path d="M2 1.5L7 5L2 8.5Z" fill="none" stroke="#c4c4c4" stroke-width="0.9"/></svg>
<div class="t" style="left:34.6px;top:761.2px;font-size:14.4px;color:#202020;font-weight:bold;letter-spacing:0px;transform:scaleX(0.8651);transform-origin:0 0;">Variables info</div>
<svg class="r" style="left:18px;top:764.4px" width="10" height="10" viewBox="0 0 10 10"><path d="M8 1.5V8.5H1Z" fill="none" stroke="#c4c4c4" stroke-width="0.9"/></svg>
<div class="t" style="left:34.6px;top:783.3px;font-size:14.4px;color:#444;font-weight:normal;letter-spacing:0px;transform:scaleX(0.9254);transform-origin:0 0;">InputVariables</div>
<div class="t" style="left:142.7px;top:783.3px;font-size:14.4px;color:#444;font-weight:normal;letter-spacing:0px;transform:scaleX(0.6042);transform-origin:0 0;">(Collection)</div>
<div class="r" style="left:17px;top:470.8px;width:236px;height:1px;background:#f2f2f2"></div>
<div class="r" style="left:137.5px;top:471.9px;width:1px;height:21.80000000000001px;background:#f3f3f3"></div>
<div class="r" style="left:253px;top:471.9px;width:1px;height:21.80000000000001px;background:#f3f3f3"></div>
<div class="r" style="left:17px;top:493.7px;width:236px;height:1px;background:#f2f2f2"></div>
<div class="r" style="left:137.5px;top:493.0px;width:1px;height:21.799999999999955px;background:#f3f3f3"></div>
<div class="r" style="left:253px;top:493.0px;width:1px;height:21.799999999999955px;background:#f3f3f3"></div>
<div class="r" style="left:17px;top:514.8px;width:236px;height:1px;background:#f2f2f2"></div>
<div class="r" style="left:137.5px;top:514.3000000000001px;width:1px;height:21.799999999999955px;background:#f3f3f3"></div>
<div class="r" style="left:253px;top:514.3000000000001px;width:1px;height:21.799999999999955px;background:#f3f3f3"></div>
<div class="r" style="left:17px;top:536.1px;width:236px;height:1px;background:#f2f2f2"></div>
<div class="r" style="left:137.5px;top:536.2px;width:1px;height:21.799999999999955px;background:#f3f3f3"></div>
<div class="r" style="left:253px;top:536.2px;width:1px;height:21.799999999999955px;background:#f3f3f3"></div>
<div class="r" style="left:17px;top:558.0px;width:236px;height:1px;background:#f2f2f2"></div>
<div class="r" style="left:137.5px;top:557.5px;width:1px;height:21.799999999999955px;background:#f3f3f3"></div>
<div class="r" style="left:253px;top:557.5px;width:1px;height:21.799999999999955px;background:#f3f3f3"></div>
<div class="r" style="left:17px;top:579.3px;width:236px;height:1px;background:#f2f2f2"></div>
<div class="r" style="left:137.5px;top:579.4000000000001px;width:1px;height:21.799999999999955px;background:#f3f3f3"></div>
<div class="r" style="left:253px;top:579.4000000000001px;width:1px;height:21.799999999999955px;background:#f3f3f3"></div>
<div class="r" style="left:17px;top:601.2px;width:236px;height:1px;background:#f2f2f2"></div>
<div class="r" style="left:137.5px;top:600.7px;width:1px;height:21.799999999999955px;background:#f3f3f3"></div>
<div class="r" style="left:253px;top:600.7px;width:1px;height:21.799999999999955px;background:#f3f3f3"></div>
<div class="r" style="left:17px;top:622.5px;width:236px;height:1px;background:#f2f2f2"></div>
<div class="r" style="left:17px;top:645.3px;width:236px;height:1px;background:#f2f2f2"></div>
<div class="r" style="left:137.5px;top:645.7px;width:1px;height:21.799999999999955px;background:#f3f3f3"></div>
<div class="r" style="left:253px;top:645.7px;width:1px;height:21.799999999999955px;background:#f3f3f3"></div>
<div class="r" style="left:17px;top:667.5px;width:236px;height:1px;background:#f2f2f2"></div>
<div class="r" style="left:137.5px;top:668.0px;width:1px;height:21.799999999999955px;background:#f3f3f3"></div>
<div class="r" style="left:253px;top:668.0px;width:1px;height:21.799999999999955px;background:#f3f3f3"></div>
<div class="r" style="left:17px;top:689.8px;width:236px;height:1px;background:#f2f2f2"></div>
<div class="r" style="left:137.5px;top:689.5px;width:1px;height:21.799999999999955px;background:#f3f3f3"></div>
<div class="r" style="left:253px;top:689.5px;width:1px;height:21.799999999999955px;background:#f3f3f3"></div>
<div class="r" style="left:17px;top:711.3px;width:236px;height:1px;background:#f2f2f2"></div>
<div class="r" style="left:17px;top:733.1px;width:236px;height:1px;background:#f2f2f2"></div>
<div class="r" style="left:137.5px;top:734.0px;width:1px;height:21.799999999999955px;background:#f3f3f3"></div>
<div class="r" style="left:253px;top:734.0px;width:1px;height:21.799999999999955px;background:#f3f3f3"></div>
<div class="r" style="left:17px;top:755.8px;width:236px;height:1px;background:#f2f2f2"></div>
<div class="r" style="left:17px;top:778.9px;width:236px;height:1px;background:#f2f2f2"></div>
<div class="r" style="left:137.5px;top:779.2px;width:1px;height:21.799999999999955px;background:#f3f3f3"></div>
<div class="r" style="left:253px;top:779.2px;width:1px;height:21.799999999999955px;background:#f3f3f3"></div>
<div class="r" style="left:17px;top:801.0px;width:236px;height:1px;background:#f2f2f2"></div>
<div class="r" style="left:257.6px;top:449.5px;width:16.2px;height:17.5px;box-sizing:border-box;border:1.2px solid #e2e2e2;background:#fff"></div>
<div class="r" style="left:257.6px;top:466.5px;width:16.2px;height:262px;box-sizing:border-box;border:1.2px solid #e2e2e2;border-top-width:1.6px;background:#fff"></div>
<div class="r" style="left:257.6px;top:770.8px;width:16.2px;height:18.5px;box-sizing:border-box;border:1.2px solid #e2e2e2;background:#fff"></div>
<svg class="r" style="left:259px;top:452px" width="14" height="10" viewBox="0 0 14 10"><path d="M3 7.5L6.7 3.3L10.4 7.5Z" fill="#8f8f8f"/></svg>
<svg class="r" style="left:259px;top:776px" width="14" height="10" viewBox="0 0 14 10"><path d="M3 2.5L6.7 6.7L10.4 2.5Z" fill="#8f8f8f"/></svg>
<div class="r" style="left:281px;top:127px;width:806px;height:530.5px;box-sizing:border-box;border:1.6px solid #d9d9d9;border-top:none;background:#fff"></div>
<div class="r" style="left:281px;top:127px;width:806px;height:33px;background:#3888cd"></div>
<div class="r" style="left:336.4px;top:128.7px;width:94.4px;height:31px;background:#4fa0e3"></div>
<div class="t" style="left:290px;top:136.5px;font-size:14.5px;color:#eef5fc;font-weight:normal;letter-spacing:0px;transform:scaleX(0.8750);transform-origin:0 0;">Data</div>
<div class="t" style="left:344.4px;top:136.5px;font-size:14.5px;color:#f4f9fe;font-weight:normal;letter-spacing:0px;transform:scaleX(1.0090);transform-origin:0 0;">Regression</div>
<div class="t" style="left:746.9px;top:136.5px;font-size:14.5px;color:#eef5fc;font-weight:normal;letter-spacing:0px;transform:scaleX(0.9270);transform-origin:0 0;">[Model] MD_0001, RANSAC [Score] 0.347 [Error] 0.333</div>
<svg width="1102" height="840" viewBox="0 0 1102 840" style="position:absolute;left:0;top:0">
<path d="M344.5 193.5V622.0M423.8 193.5V622.0M503.0 193.5V622.0M582.2 193.5V622.0M661.5 193.5V622.0M740.8 193.5V622.0M820.0 193.5V622.0M899.2 193.5V622.0M978.5 193.5V622.0M344.5 622.0H1029.7M344.5 560.8H1029.7M344.5 499.6H1029.7M344.5 438.4H1029.7M344.5 377.2H1029.7M344.5 316.0H1029.7M344.5 254.8H1029.7M344.5 193.6H1029.7" stroke="#dedede" stroke-width="1.1" stroke-dasharray="1.3 5.5" fill="none"/>
<g fill="#de3522" stroke="#9c1c0c" stroke-width="0.7"><rect x="343.3" y="617.1" width="2.4" height="4.9"/><rect x="347.3" y="619.5" width="2.4" height="2.5"/><rect x="351.2" y="617.4" width="2.4" height="4.6"/><rect x="355.2" y="615.8" width="2.4" height="6.2"/><rect x="359.2" y="620.0" width="2.4" height="2.0"/><rect x="363.1" y="619.0" width="2.4" height="3.0"/><rect x="367.1" y="619.5" width="2.4" height="2.5"/><rect x="371.0" y="611.0" width="2.4" height="11.0"/><rect x="375.0" y="614.0" width="2.4" height="8.0"/><rect x="379.0" y="612.0" width="2.4" height="10.0"/><rect x="382.9" y="606.5" width="2.4" height="15.5"/><rect x="386.9" y="621.2" width="2.4" height="0.8"/><rect x="390.9" y="618.0" width="2.4" height="4.0"/><rect x="398.8" y="618.0" width="2.4" height="4.0"/><rect x="402.7" y="621.2" width="2.4" height="0.8"/><rect x="406.7" y="619.0" width="2.4" height="3.0"/><rect x="410.7" y="612.0" width="2.4" height="10.0"/><rect x="414.6" y="614.0" width="2.4" height="8.0"/><rect x="418.6" y="614.0" width="2.4" height="8.0"/><rect x="422.6" y="609.0" width="2.4" height="13.0"/><rect x="426.5" y="621.2" width="2.4" height="0.8"/><rect x="430.5" y="619.0" width="2.4" height="3.0"/><rect x="434.4" y="614.0" width="2.4" height="8.0"/><rect x="438.4" y="620.7" width="2.4" height="1.3"/><rect x="442.4" y="619.5" width="2.4" height="2.5"/><rect x="446.3" y="615.5" width="2.4" height="6.5"/><rect x="450.3" y="611.0" width="2.4" height="11.0"/><rect x="454.2" y="618.4" width="2.4" height="3.6"/><rect x="458.2" y="620.7" width="2.4" height="1.3"/><rect x="462.2" y="620.4" width="2.4" height="1.6"/><rect x="466.1" y="620.0" width="2.4" height="2.0"/><rect x="470.1" y="618.4" width="2.4" height="3.6"/><rect x="474.1" y="615.0" width="2.4" height="7.0"/><rect x="478.0" y="618.0" width="2.4" height="4.0"/><rect x="482.0" y="612.0" width="2.4" height="10.0"/><rect x="485.9" y="620.0" width="2.4" height="2.0"/><rect x="489.9" y="619.5" width="2.4" height="2.5"/><rect x="493.9" y="616.3" width="2.4" height="5.7"/><rect x="497.8" y="621.2" width="2.4" height="0.8"/><rect x="501.8" y="613.0" width="2.4" height="9.0"/><rect x="505.8" y="615.0" width="2.4" height="7.0"/><rect x="509.7" y="615.0" width="2.4" height="7.0"/><rect x="513.7" y="621.2" width="2.4" height="0.8"/><rect x="517.6" y="618.0" width="2.4" height="4.0"/><rect x="521.6" y="616.8" width="2.4" height="5.2"/><rect x="525.6" y="621.2" width="2.4" height="0.8"/><rect x="529.5" y="616.8" width="2.4" height="5.2"/><rect x="533.5" y="620.4" width="2.4" height="1.6"/><rect x="537.5" y="620.0" width="2.4" height="2.0"/><rect x="541.4" y="621.2" width="2.4" height="0.8"/><rect x="545.4" y="613.0" width="2.4" height="9.0"/><rect x="549.3" y="618.0" width="2.4" height="4.0"/><rect x="553.3" y="618.0" width="2.4" height="4.0"/><rect x="557.3" y="614.6" width="2.4" height="7.4"/><rect x="561.2" y="612.0" width="2.4" height="10.0"/><rect x="565.2" y="620.4" width="2.4" height="1.6"/><rect x="569.2" y="614.2" width="2.4" height="7.8"/><rect x="577.1" y="618.7" width="2.4" height="3.3"/><rect x="581.0" y="617.0" width="2.4" height="5.0"/><rect x="585.0" y="609.7" width="2.4" height="12.3"/><rect x="589.0" y="615.5" width="2.4" height="6.5"/><rect x="592.9" y="618.0" width="2.4" height="4.0"/><rect x="596.9" y="609.7" width="2.4" height="12.3"/><rect x="600.9" y="606.5" width="2.4" height="15.5"/><rect x="604.8" y="615.5" width="2.4" height="6.5"/><rect x="608.8" y="621.2" width="2.4" height="0.8"/><rect x="612.8" y="621.2" width="2.4" height="0.8"/><rect x="616.7" y="620.4" width="2.4" height="1.6"/><rect x="624.6" y="620.0" width="2.4" height="2.0"/><rect x="628.6" y="618.0" width="2.4" height="4.0"/><rect x="632.6" y="619.5" width="2.4" height="2.5"/><rect x="636.5" y="602.7" width="2.4" height="19.3"/><rect x="640.5" y="607.6" width="2.4" height="14.4"/><rect x="644.4" y="620.0" width="2.4" height="2.0"/><rect x="648.4" y="621.2" width="2.4" height="0.8"/><rect x="652.4" y="614.2" width="2.4" height="7.8"/><rect x="656.3" y="615.5" width="2.4" height="6.5"/><rect x="660.3" y="611.0" width="2.4" height="11.0"/><rect x="664.3" y="610.6" width="2.4" height="11.4"/><rect x="668.2" y="618.0" width="2.4" height="4.0"/><rect x="672.2" y="618.7" width="2.4" height="3.3"/><rect x="676.1" y="596.2" width="2.4" height="25.8"/><rect x="680.1" y="606.5" width="2.4" height="15.5"/><rect x="684.1" y="621.2" width="2.4" height="0.8"/><rect x="688.0" y="620.0" width="2.4" height="2.0"/><rect x="692.0" y="620.7" width="2.4" height="1.3"/><rect x="696.0" y="620.4" width="2.4" height="1.6"/><rect x="703.9" y="614.6" width="2.4" height="7.4"/><rect x="707.8" y="617.0" width="2.4" height="5.0"/><rect x="711.8" y="616.8" width="2.4" height="5.2"/><rect x="715.8" y="612.0" width="2.4" height="10.0"/><rect x="719.7" y="621.2" width="2.4" height="0.8"/><rect x="723.7" y="615.8" width="2.4" height="6.2"/><rect x="727.7" y="613.5" width="2.4" height="8.5"/><rect x="731.6" y="620.4" width="2.4" height="1.6"/><rect x="735.6" y="620.0" width="2.4" height="2.0"/><rect x="739.5" y="618.7" width="2.4" height="3.3"/><rect x="743.5" y="618.7" width="2.4" height="3.3"/><rect x="747.5" y="618.7" width="2.4" height="3.3"/><rect x="751.4" y="621.2" width="2.4" height="0.8"/><rect x="755.4" y="621.2" width="2.4" height="0.8"/><rect x="759.4" y="613.0" width="2.4" height="9.0"/><rect x="763.3" y="612.0" width="2.4" height="10.0"/><rect x="767.3" y="611.0" width="2.4" height="11.0"/><rect x="771.2" y="620.0" width="2.4" height="2.0"/><rect x="775.2" y="619.0" width="2.4" height="3.0"/><rect x="779.2" y="619.0" width="2.4" height="3.0"/><rect x="783.1" y="621.2" width="2.4" height="0.8"/><rect x="787.1" y="616.8" width="2.4" height="5.2"/><rect x="791.1" y="620.0" width="2.4" height="2.0"/><rect x="795.0" y="621.2" width="2.4" height="0.8"/><rect x="799.0" y="621.2" width="2.4" height="0.8"/><rect x="802.9" y="619.5" width="2.4" height="2.5"/><rect x="806.9" y="621.2" width="2.4" height="0.8"/><rect x="810.9" y="617.0" width="2.4" height="5.0"/><rect x="814.8" y="612.0" width="2.4" height="10.0"/><rect x="822.8" y="621.2" width="2.4" height="0.8"/><rect x="826.7" y="620.0" width="2.4" height="2.0"/><rect x="830.7" y="614.0" width="2.4" height="8.0"/><rect x="834.6" y="618.0" width="2.4" height="4.0"/><rect x="842.6" y="618.0" width="2.4" height="4.0"/><rect x="846.5" y="620.4" width="2.4" height="1.6"/><rect x="854.5" y="618.0" width="2.4" height="4.0"/><rect x="858.4" y="616.3" width="2.4" height="5.7"/><rect x="862.4" y="618.0" width="2.4" height="4.0"/><rect x="866.3" y="606.5" width="2.4" height="15.5"/><rect x="870.3" y="619.1" width="2.4" height="2.9"/><rect x="874.3" y="621.2" width="2.4" height="0.8"/><rect x="878.2" y="617.1" width="2.4" height="4.9"/><rect x="886.2" y="617.1" width="2.4" height="4.9"/><rect x="890.1" y="621.2" width="2.4" height="0.8"/><rect x="894.1" y="610.6" width="2.4" height="11.4"/><rect x="898.0" y="606.5" width="2.4" height="15.5"/><rect x="902.0" y="579.2" width="2.4" height="42.8"/><rect x="906.0" y="597.5" width="2.4" height="24.5"/><rect x="909.9" y="615.5" width="2.4" height="6.5"/><rect x="913.9" y="609.7" width="2.4" height="12.3"/><rect x="917.9" y="617.1" width="2.4" height="4.9"/><rect x="921.8" y="613.0" width="2.4" height="9.0"/><rect x="925.8" y="620.4" width="2.4" height="1.6"/><rect x="929.7" y="615.1" width="2.4" height="6.9"/><rect x="937.7" y="620.4" width="2.4" height="1.6"/><rect x="941.6" y="620.4" width="2.4" height="1.6"/><rect x="945.6" y="620.4" width="2.4" height="1.6"/><rect x="949.6" y="618.0" width="2.4" height="4.0"/><rect x="953.5" y="621.2" width="2.4" height="0.8"/><rect x="957.5" y="612.0" width="2.4" height="10.0"/><rect x="961.4" y="617.1" width="2.4" height="4.9"/><rect x="965.4" y="609.7" width="2.4" height="12.3"/><rect x="969.4" y="618.0" width="2.4" height="4.0"/><rect x="973.3" y="618.7" width="2.4" height="3.3"/><rect x="977.3" y="618.0" width="2.4" height="4.0"/><rect x="981.3" y="618.0" width="2.4" height="4.0"/><rect x="989.2" y="621.2" width="2.4" height="0.8"/><rect x="993.1" y="612.2" width="2.4" height="9.8"/><rect x="997.1" y="601.6" width="2.4" height="20.4"/><rect x="1001.1" y="601.6" width="2.4" height="20.4"/><rect x="1005.0" y="621.2" width="2.4" height="0.8"/><rect x="1009.0" y="620.4" width="2.4" height="1.6"/><rect x="1013.0" y="618.7" width="2.4" height="3.3"/><rect x="1016.9" y="621.2" width="2.4" height="0.8"/><rect x="1020.9" y="619.0" width="2.4" height="3.0"/><rect x="1024.8" y="612.0" width="2.4" height="10.0"/></g>
<path d="M344.5 193.5H1029.7V622.0H344.5Z" stroke="#8e8e8e" stroke-width="1.5" fill="none"/>
<path d="M339.5 622.0H350.5M1023.7 622.0H1029.7M339.5 560.8H350.5M1023.7 560.8H1029.7M339.5 499.6H350.5M1023.7 499.6H1029.7M339.5 438.4H350.5M1023.7 438.4H1029.7M339.5 377.2H350.5M1023.7 377.2H1029.7M339.5 316.0H350.5M1023.7 316.0H1029.7M339.5 254.8H350.5M1023.7 254.8H1029.7M339.5 193.6H350.5M1023.7 193.6H1029.7M1023.7 622.0H1035.2M344.5 622.0H350.5M1023.7 562.4H1035.2M344.5 562.4H350.5M1023.7 502.8H1035.2M344.5 502.8H350.5M1023.7 443.2H1035.2M344.5 443.2H350.5M1023.7 383.6H1035.2M344.5 383.6H350.5M1023.7 324.0H1035.2M344.5 324.0H350.5M1023.7 264.4H1035.2M344.5 264.4H350.5M1023.7 204.8H1035.2M344.5 204.8H350.5M344.5 616.0V628.0M344.5 193.5V199.5M423.8 616.0V628.0M423.8 193.5V199.5M503.0 616.0V628.0M503.0 193.5V199.5M582.2 616.0V628.0M582.2 193.5V199.5M661.5 616.0V628.0M661.5 193.5V199.5M740.8 616.0V628.0M740.8 193.5V199.5M820.0 616.0V628.0M820.0 193.5V199.5M899.2 616.0V628.0M899.2 193.5V199.5M978.5 616.0V628.0M978.5 193.5V199.5" stroke="#8e8e8e" stroke-width="1.4" fill="none"/>
<clipPath id="pc"><rect x="344.5" y="193.5" width="685.2" height="428.5"/></clipPath><g clip-path="url(#pc)">
<polyline points="344.5,374.8 348.5,380.9 352.4,388.2 356.4,390.7 360.4,413.9 364.3,415.1 368.3,445.7 372.2,495.9 376.2,489.8 380.2,422.5 384.1,382.1 388.1,384.5 392.1,365.0 396.0,346.6 400.0,314.8 403.9,316.0 407.9,319.7 411.9,346.6 415.8,350.3 419.8,373.5 423.8,409.0 427.7,369.9 431.7,388.2 435.6,413.9 439.6,400.5 443.6,416.4 447.5,424.9 451.5,448.2 455.4,427.4 459.4,428.6 463.4,431.1 467.3,436.0 471.3,447.0 475.3,449.4 479.2,391.9 483.2,365.0 487.1,347.8 491.1,335.6 495.1,290.3 499.0,313.6 503.0,313.6 507.0,324.6 510.9,325.8 514.9,322.1 518.9,341.7 522.8,347.8 526.8,353.9 530.7,379.6 534.7,371.1 538.7,374.8 542.6,388.2 546.6,413.9 550.5,400.5 554.5,395.6 558.5,432.3 562.4,443.3 566.4,420.0 570.4,401.7 574.3,410.2 578.3,394.3 582.2,366.2 586.2,316.0 590.2,320.9 594.1,327.0 598.1,387.0 602.1,415.1 606.0,423.7 610.0,413.9 614.0,428.6 617.9,410.2 621.9,447.0 625.8,460.4 629.8,478.8 633.8,443.3 637.7,374.8 641.7,351.5 645.6,356.4 649.6,330.7 653.6,302.5 657.5,303.8 661.5,368.6 665.5,378.4 669.4,372.3 673.4,450.6 677.3,325.8 681.3,334.4 685.3,358.8 689.2,361.3 693.2,367.4 697.2,366.2 701.1,384.5 705.1,374.8 709.0,398.0 713.0,469.0 717.0,500.8 720.9,488.6 724.9,484.9 728.9,475.1 732.8,495.9 736.8,487.4 740.8,494.7 744.7,486.1 748.7,492.3 752.6,506.9 756.6,493.5 760.6,472.7 764.5,453.1 768.5,417.6 772.5,424.9 776.4,391.9 780.4,426.2 784.3,391.9 788.3,404.1 792.3,394.3 796.2,390.7 800.2,378.4 804.1,400.5 808.1,387.0 812.1,426.2 816.0,429.8 820.0,411.5 824.0,407.8 827.9,413.9 831.9,401.7 835.8,391.9 839.8,385.8 843.8,384.5 847.7,373.5 851.7,373.5 855.7,373.5 859.6,367.4 863.6,312.3 867.5,264.6 871.5,283.0 875.5,271.9 879.4,260.9 883.4,301.3 887.4,302.5 891.3,298.9 895.3,286.6 899.2,422.5 903.2,530.2 907.2,536.3 911.1,484.9 915.1,462.9 919.1,431.1 923.0,400.5 927.0,428.6 930.9,420.0 934.9,417.6 941.3,412.7 946.0,389.4 949.6,379.6 953.1,384.5 957.9,389.4 961.5,325.8 965.4,303.8 969.4,314.8 973.3,298.9 977.3,307.4 982.1,298.9 985.6,295.2 989.2,292.7 993.2,350.3 997.1,406.6 1000.7,406.6 1004.7,394.3 1008.2,391.9 1012.2,390.7 1016.1,389.4 1019.7,393.1 1024.1,427.4 1028.0,388.2 1031.2,398.0" stroke="#ee66f2" stroke-width="1.4" fill="none"/>
<path d="M344.5 370.3L348.6 378.1H340.4ZM348.5 376.4L352.6 384.2H344.4ZM352.4 383.7L356.5 391.5H348.3ZM356.4 386.2L360.5 394.0H352.3ZM360.4 409.4L364.5 417.2H356.2ZM364.3 410.6L368.4 418.4H360.2ZM368.3 441.2L372.4 449.0H364.2ZM372.2 491.4L376.3 499.2H368.1ZM376.2 485.3L380.3 493.1H372.1ZM380.2 418.0L384.3 425.8H376.1ZM384.1 377.6L388.2 385.4H380.0ZM388.1 380.0L392.2 387.8H384.0ZM392.1 360.5L396.2 368.3H387.9ZM396.0 342.1L400.1 349.9H391.9ZM400.0 310.3L404.1 318.1H395.9ZM403.9 311.5L408.0 319.3H399.8ZM407.9 315.2L412.0 323.0H403.8ZM411.9 342.1L416.0 349.9H407.8ZM415.8 345.8L419.9 353.6H411.7ZM419.8 369.0L423.9 376.8H415.7ZM423.8 404.5L427.9 412.3H419.6ZM427.7 365.4L431.8 373.2H423.6ZM431.7 383.7L435.8 391.5H427.6ZM435.6 409.4L439.7 417.2H431.5ZM439.6 396.0L443.7 403.8H435.5ZM443.6 411.9L447.7 419.7H439.5ZM447.5 420.4L451.6 428.2H443.4ZM451.5 443.7L455.6 451.5H447.4ZM455.4 422.9L459.6 430.7H451.3ZM459.4 424.1L463.5 431.9H455.3ZM463.4 426.6L467.5 434.4H459.3ZM467.3 431.5L471.4 439.3H463.2ZM471.3 442.5L475.4 450.3H467.2ZM475.3 444.9L479.4 452.7H471.2ZM479.2 387.4L483.3 395.2H475.1ZM483.2 360.5L487.3 368.3H479.1ZM487.1 343.3L491.2 351.1H483.0ZM491.1 331.1L495.2 338.9H487.0ZM495.1 285.8L499.2 293.6H491.0ZM499.0 309.1L503.1 316.9H494.9ZM503.0 309.1L507.1 316.9H498.9ZM507.0 320.1L511.1 327.9H502.9ZM510.9 321.3L515.0 329.1H506.8ZM514.9 317.6L519.0 325.4H510.8ZM518.9 337.2L523.0 345.0H514.8ZM522.8 343.3L526.9 351.1H518.7ZM526.8 349.4L530.9 357.2H522.7ZM530.7 375.1L534.8 382.9H526.6ZM534.7 366.6L538.8 374.4H530.6ZM538.7 370.3L542.8 378.1H534.6ZM542.6 383.7L546.7 391.5H538.5ZM546.6 409.4L550.7 417.2H542.5ZM550.5 396.0L554.6 403.8H546.4ZM554.5 391.1L558.6 398.9H550.4ZM558.5 427.8L562.6 435.6H554.4ZM562.4 438.8L566.5 446.6H558.3ZM566.4 415.5L570.5 423.3H562.3ZM570.4 397.2L574.5 405.0H566.3ZM574.3 405.7L578.4 413.5H570.2ZM578.3 389.8L582.4 397.6H574.2ZM582.2 361.7L586.4 369.5H578.1ZM586.2 311.5L590.3 319.3H582.1ZM590.2 316.4L594.3 324.2H586.1ZM594.1 322.5L598.2 330.3H590.0ZM598.1 382.5L602.2 390.3H594.0ZM602.1 410.6L606.2 418.4H598.0ZM606.0 419.2L610.1 427.0H601.9ZM610.0 409.4L614.1 417.2H605.9ZM614.0 424.1L618.1 431.9H609.9ZM617.9 405.7L622.0 413.5H613.8ZM621.9 442.5L626.0 450.3H617.8ZM625.8 455.9L629.9 463.7H621.7ZM629.8 474.3L633.9 482.1H625.7ZM633.8 438.8L637.9 446.6H629.7ZM637.7 370.3L641.8 378.1H633.6ZM641.7 347.0L645.8 354.8H637.6ZM645.6 351.9L649.8 359.7H641.5ZM649.6 326.2L653.7 334.0H645.5ZM653.6 298.0L657.7 305.8H649.5ZM657.5 299.3L661.6 307.1H653.4ZM661.5 364.1L665.6 371.9H657.4ZM665.5 373.9L669.6 381.7H661.4ZM669.4 367.8L673.5 375.6H665.3ZM673.4 446.1L677.5 453.9H669.3ZM677.3 321.3L681.4 329.1H673.2ZM681.3 329.9L685.4 337.7H677.2ZM685.3 354.3L689.4 362.1H681.2ZM689.2 356.8L693.3 364.6H685.1ZM693.2 362.9L697.3 370.7H689.1ZM697.2 361.7L701.3 369.5H693.1ZM701.1 380.0L705.2 387.8H697.0ZM705.1 370.3L709.2 378.1H701.0ZM709.0 393.5L713.1 401.3H704.9ZM713.0 464.5L717.1 472.3H708.9ZM717.0 496.3L721.1 504.1H712.9ZM720.9 484.1L725.0 491.9H716.8ZM724.9 480.4L729.0 488.2H720.8ZM728.9 470.6L733.0 478.4H724.8ZM732.8 491.4L736.9 499.2H728.7ZM736.8 482.9L740.9 490.7H732.7ZM740.8 490.2L744.9 498.0H736.6ZM744.7 481.6L748.8 489.4H740.6ZM748.7 487.8L752.8 495.6H744.6ZM752.6 502.4L756.7 510.2H748.5ZM756.6 489.0L760.7 496.8H752.5ZM760.6 468.2L764.7 476.0H756.5ZM764.5 448.6L768.6 456.4H760.4ZM768.5 413.1L772.6 420.9H764.4ZM772.5 420.4L776.6 428.2H768.4ZM776.4 387.4L780.5 395.2H772.3ZM780.4 421.7L784.5 429.5H776.3ZM784.3 387.4L788.4 395.2H780.2ZM788.3 399.6L792.4 407.4H784.2ZM792.3 389.8L796.4 397.6H788.2ZM796.2 386.2L800.3 394.0H792.1ZM800.2 373.9L804.3 381.7H796.1ZM804.1 396.0L808.2 403.8H800.0ZM808.1 382.5L812.2 390.3H804.0ZM812.1 421.7L816.2 429.5H808.0ZM816.0 425.3L820.1 433.1H811.9ZM820.0 407.0L824.1 414.8H815.9ZM824.0 403.3L828.1 411.1H819.9ZM827.9 409.4L832.0 417.2H823.8ZM831.9 397.2L836.0 405.0H827.8ZM835.8 387.4L839.9 395.2H831.7ZM839.8 381.3L843.9 389.1H835.7ZM843.8 380.0L847.9 387.8H839.7ZM847.7 369.0L851.8 376.8H843.6ZM851.7 369.0L855.8 376.8H847.6ZM855.7 369.0L859.8 376.8H851.6ZM859.6 362.9L863.7 370.7H855.5ZM863.6 307.8L867.7 315.6H859.5ZM867.5 260.1L871.6 267.9H863.4ZM871.5 278.5L875.6 286.3H867.4ZM875.5 267.4L879.6 275.2H871.4ZM879.4 256.4L883.5 264.2H875.3ZM883.4 296.8L887.5 304.6H879.3ZM887.4 298.0L891.5 305.8H883.3ZM891.3 294.4L895.4 302.2H887.2ZM895.3 282.1L899.4 289.9H891.2ZM899.2 418.0L903.4 425.8H895.1ZM903.2 525.7L907.3 533.5H899.1ZM907.2 531.8L911.3 539.6H903.1ZM911.1 480.4L915.2 488.2H907.0ZM915.1 458.4L919.2 466.2H911.0ZM919.1 426.6L923.2 434.4H915.0ZM923.0 396.0L927.1 403.8H918.9ZM927.0 424.1L931.1 431.9H922.9ZM930.9 415.5L935.0 423.3H926.8ZM934.9 413.1L939.0 420.9H930.8ZM941.3 408.2L945.4 416.0H937.2ZM946.0 384.9L950.1 392.7H941.9ZM949.6 375.1L953.7 382.9H945.5ZM953.1 380.0L957.2 387.8H949.0ZM957.9 384.9L962.0 392.7H953.8ZM961.5 321.3L965.6 329.1H957.4ZM965.4 299.3L969.5 307.1H961.3ZM969.4 310.3L973.5 318.1H965.3ZM973.3 294.4L977.4 302.2H969.2ZM977.3 302.9L981.4 310.7H973.2ZM982.1 294.4L986.2 302.2H978.0ZM985.6 290.7L989.7 298.5H981.5ZM989.2 288.2L993.3 296.0H985.1ZM993.2 345.8L997.3 353.6H989.1ZM997.1 402.1L1001.2 409.9H993.0ZM1000.7 402.1L1004.8 409.9H996.6ZM1004.7 389.8L1008.8 397.6H1000.6ZM1008.2 387.4L1012.3 395.2H1004.1ZM1012.2 386.2L1016.3 394.0H1008.1ZM1016.1 384.9L1020.2 392.7H1012.0ZM1019.7 388.6L1023.8 396.4H1015.6ZM1024.1 422.9L1028.2 430.7H1020.0ZM1028.0 383.7L1032.1 391.5H1023.9ZM1031.2 393.5L1035.3 401.3H1027.1Z" fill="#ee55f5"/>
<g fill="#ea4022"><circle cx="348.5" cy="394.9" r="3.9"/><circle cx="352.4" cy="407.8" r="3.9"/><circle cx="356.4" cy="420.0" r="3.9"/><circle cx="360.4" cy="423.7" r="3.9"/><circle cx="364.3" cy="424.9" r="3.9"/><circle cx="368.3" cy="432.3" r="3.9"/><circle cx="372.2" cy="448.2" r="3.9"/><circle cx="376.2" cy="454.3" r="3.9"/><circle cx="380.2" cy="466.6" r="3.9"/><circle cx="384.1" cy="447.0" r="3.9"/><circle cx="388.1" cy="380.9" r="3.9"/><circle cx="392.1" cy="346.6" r="3.9"/><circle cx="396.0" cy="344.2" r="3.9"/><circle cx="400.0" cy="333.1" r="3.9"/><circle cx="403.9" cy="319.7" r="3.9"/><circle cx="407.9" cy="302.5" r="3.9"/><circle cx="411.9" cy="306.2" r="3.9"/><circle cx="415.8" cy="314.8" r="3.9"/><circle cx="419.8" cy="341.7" r="3.9"/><circle cx="423.8" cy="353.9" r="3.9"/><circle cx="427.7" cy="374.8" r="3.9"/><circle cx="431.7" cy="369.9" r="3.9"/><circle cx="435.6" cy="382.1" r="3.9"/><circle cx="439.6" cy="391.9" r="3.9"/><circle cx="443.6" cy="400.5" r="3.9"/><circle cx="447.5" cy="396.8" r="3.9"/><circle cx="451.5" cy="399.2" r="3.9"/><circle cx="455.4" cy="409.0" r="3.9"/><circle cx="459.4" cy="433.5" r="3.9"/><circle cx="463.4" cy="422.5" r="3.9"/><circle cx="467.3" cy="423.7" r="3.9"/><circle cx="471.3" cy="428.6" r="3.9"/><circle cx="475.3" cy="416.4" r="3.9"/><circle cx="479.2" cy="411.5" r="3.9"/><circle cx="483.2" cy="407.8" r="3.9"/><circle cx="487.1" cy="357.6" r="3.9"/><circle cx="491.1" cy="325.8" r="3.9"/><circle cx="495.1" cy="314.8" r="3.9"/><circle cx="499.0" cy="312.3" r="3.9"/><circle cx="503.0" cy="278.1" r="3.9"/><circle cx="507.0" cy="296.4" r="3.9"/><circle cx="510.9" cy="298.9" r="3.9"/><circle cx="514.9" cy="314.8" r="3.9"/><circle cx="518.9" cy="320.9" r="3.9"/><circle cx="522.8" cy="325.8" r="3.9"/><circle cx="526.8" cy="350.3" r="3.9"/><circle cx="530.7" cy="356.4" r="3.9"/><circle cx="534.7" cy="362.5" r="3.9"/><circle cx="538.7" cy="383.3" r="3.9"/><circle cx="542.6" cy="384.5" r="3.9"/><circle cx="546.6" cy="376.0" r="3.9"/><circle cx="550.5" cy="382.1" r="3.9"/><circle cx="554.5" cy="412.7" r="3.9"/><circle cx="558.5" cy="401.7" r="3.9"/><circle cx="562.4" cy="400.5" r="3.9"/><circle cx="566.4" cy="426.2" r="3.9"/><circle cx="570.4" cy="432.3" r="3.9"/><circle cx="574.3" cy="407.8" r="3.9"/><circle cx="578.3" cy="383.3" r="3.9"/><circle cx="582.2" cy="374.8" r="3.9"/><circle cx="586.2" cy="367.4" r="3.9"/><circle cx="590.2" cy="346.6" r="3.9"/><circle cx="594.1" cy="306.2" r="3.9"/><circle cx="598.1" cy="335.6" r="3.9"/><circle cx="602.1" cy="349.0" r="3.9"/><circle cx="606.0" cy="394.3" r="3.9"/><circle cx="610.0" cy="420.0" r="3.9"/><circle cx="614.0" cy="422.5" r="3.9"/><circle cx="617.9" cy="400.5" r="3.9"/><circle cx="621.9" cy="444.5" r="3.9"/><circle cx="625.8" cy="453.1" r="3.9"/><circle cx="629.8" cy="458.0" r="3.9"/><circle cx="633.8" cy="453.1" r="3.9"/><circle cx="637.7" cy="450.6" r="3.9"/><circle cx="641.7" cy="407.8" r="3.9"/><circle cx="645.6" cy="347.8" r="3.9"/><circle cx="649.6" cy="324.6" r="3.9"/><circle cx="653.6" cy="331.9" r="3.9"/><circle cx="657.5" cy="331.9" r="3.9"/><circle cx="661.5" cy="322.1" r="3.9"/><circle cx="665.5" cy="330.7" r="3.9"/><circle cx="669.4" cy="388.2" r="3.9"/><circle cx="673.4" cy="462.9" r="3.9"/><circle cx="677.3" cy="437.2" r="3.9"/><circle cx="681.3" cy="399.2" r="3.9"/><circle cx="685.3" cy="351.5" r="3.9"/><circle cx="689.2" cy="349.0" r="3.9"/><circle cx="693.2" cy="371.1" r="3.9"/><circle cx="697.2" cy="377.2" r="3.9"/><circle cx="701.1" cy="396.8" r="3.9"/><circle cx="705.1" cy="410.2" r="3.9"/><circle cx="709.0" cy="418.8" r="3.9"/><circle cx="713.0" cy="443.3" r="3.9"/><circle cx="717.0" cy="456.8" r="3.9"/><circle cx="720.9" cy="494.7" r="3.9"/><circle cx="724.9" cy="513.1" r="3.9"/><circle cx="728.9" cy="510.6" r="3.9"/><circle cx="732.8" cy="504.5" r="3.9"/><circle cx="736.8" cy="494.7" r="3.9"/><circle cx="740.8" cy="510.6" r="3.9"/><circle cx="744.7" cy="503.3" r="3.9"/><circle cx="748.7" cy="510.6" r="3.9"/><circle cx="752.6" cy="510.6" r="3.9"/><circle cx="756.6" cy="510.6" r="3.9"/><circle cx="760.6" cy="509.4" r="3.9"/><circle cx="764.5" cy="494.7" r="3.9"/><circle cx="768.5" cy="465.3" r="3.9"/><circle cx="772.5" cy="433.5" r="3.9"/><circle cx="776.4" cy="404.1" r="3.9"/><circle cx="780.4" cy="409.0" r="3.9"/><circle cx="784.3" cy="385.8" r="3.9"/><circle cx="788.3" cy="378.4" r="3.9"/><circle cx="792.3" cy="384.5" r="3.9"/><circle cx="796.2" cy="395.6" r="3.9"/><circle cx="800.2" cy="384.5" r="3.9"/><circle cx="804.1" cy="384.5" r="3.9"/><circle cx="808.1" cy="380.9" r="3.9"/><circle cx="812.1" cy="401.7" r="3.9"/><circle cx="816.0" cy="383.3" r="3.9"/><circle cx="820.0" cy="405.4" r="3.9"/></g>
<g fill="#0a3cf0"><rect x="820.2" y="400.3" width="7.6" height="7.6"/><rect x="824.1" y="389.3" width="7.6" height="7.6"/><rect x="828.1" y="373.4" width="7.6" height="7.6"/><rect x="832.0" y="368.5" width="7.6" height="7.6"/><rect x="836.0" y="378.3" width="7.6" height="7.6"/><rect x="840.0" y="362.4" width="7.6" height="7.6"/><rect x="843.9" y="358.7" width="7.6" height="7.6"/><rect x="847.9" y="363.6" width="7.6" height="7.6"/><rect x="851.9" y="350.1" width="7.6" height="7.6"/><rect x="855.8" y="334.2" width="7.6" height="7.6"/><rect x="859.8" y="328.1" width="7.6" height="7.6"/><rect x="863.8" y="328.1" width="7.6" height="7.6"/><rect x="867.7" y="290.2" width="7.6" height="7.6"/><rect x="871.7" y="260.8" width="7.6" height="7.6"/><rect x="875.6" y="280.4" width="7.6" height="7.6"/><rect x="879.6" y="275.5" width="7.6" height="7.6"/><rect x="883.6" y="275.5" width="7.6" height="7.6"/><rect x="887.5" y="288.9" width="7.6" height="7.6"/><rect x="891.5" y="328.1" width="7.6" height="7.6"/><rect x="895.5" y="351.4" width="7.6" height="7.6"/><rect x="899.4" y="350.1" width="7.6" height="7.6"/><rect x="903.4" y="432.2" width="7.6" height="7.6"/><rect x="907.3" y="510.5" width="7.6" height="7.6"/><rect x="911.3" y="510.5" width="7.6" height="7.6"/><rect x="915.3" y="453.0" width="7.6" height="7.6"/><rect x="919.2" y="434.6" width="7.6" height="7.6"/><rect x="923.2" y="416.2" width="7.6" height="7.6"/><rect x="927.1" y="388.1" width="7.6" height="7.6"/><rect x="930.3" y="406.4" width="7.6" height="7.6"/><rect x="935.1" y="401.6" width="7.6" height="7.6"/><rect x="939.8" y="396.7" width="7.6" height="7.6"/><rect x="943.4" y="395.4" width="7.6" height="7.6"/><rect x="946.6" y="396.7" width="7.6" height="7.6"/><rect x="949.3" y="374.6" width="7.6" height="7.6"/><rect x="955.3" y="345.2" width="7.6" height="7.6"/><rect x="958.9" y="345.2" width="7.6" height="7.6"/><rect x="961.2" y="348.9" width="7.6" height="7.6"/><rect x="965.6" y="291.4" width="7.6" height="7.6"/><rect x="969.5" y="281.6" width="7.6" height="7.6"/><rect x="973.5" y="282.8" width="7.6" height="7.6"/><rect x="977.9" y="276.7" width="7.6" height="7.6"/><rect x="981.4" y="286.5" width="7.6" height="7.6"/><rect x="986.2" y="296.3" width="7.6" height="7.6"/><rect x="989.4" y="306.1" width="7.6" height="7.6"/><rect x="993.3" y="317.1" width="7.6" height="7.6"/><rect x="997.3" y="319.5" width="7.6" height="7.6"/><rect x="1001.6" y="372.2" width="7.6" height="7.6"/><rect x="1006.4" y="379.5" width="7.6" height="7.6"/><rect x="1010.0" y="373.4" width="7.6" height="7.6"/><rect x="1013.1" y="377.1" width="7.6" height="7.6"/><rect x="1015.9" y="377.1" width="7.6" height="7.6"/><rect x="1020.7" y="379.5" width="7.6" height="7.6"/><rect x="1024.2" y="385.6" width="7.6" height="7.6"/></g>
</g>
<g font-family='"Liberation Sans", sans-serif' font-size="12" fill="#1e1e1e"><text x="333.5" y="626.3" text-anchor="end">2.5</text><text x="333.5" y="565.1" text-anchor="end">3.0</text><text x="333.5" y="503.9" text-anchor="end">3.5</text><text x="333.5" y="442.7" text-anchor="end">4.0</text><text x="333.5" y="381.5" text-anchor="end">4.5</text><text x="333.5" y="320.3" text-anchor="end">5.0</text><text x="333.5" y="259.1" text-anchor="end">5.5</text><text x="333.5" y="197.9" text-anchor="end">6.0</text><text x="344.5" y="643.8" text-anchor="middle">0</text><text x="423.8" y="643.8" text-anchor="middle">20</text><text x="503.0" y="643.8" text-anchor="middle">40</text><text x="582.2" y="643.8" text-anchor="middle">60</text><text x="661.5" y="643.8" text-anchor="middle">80</text><text x="740.8" y="643.8" text-anchor="middle">100</text><text x="820.0" y="643.8" text-anchor="middle">120</text><text x="899.2" y="643.8" text-anchor="middle">140</text><text x="978.5" y="643.8" text-anchor="middle">160</text><text x="1046.5" y="624.7" text-anchor="middle">0</text><text x="1046.5" y="565.1" text-anchor="middle">2</text><text x="1046.5" y="505.5" text-anchor="middle">4</text><text x="1046.5" y="445.9" text-anchor="middle">6</text><text x="1046.5" y="386.3" text-anchor="middle">8</text><text x="1046.5" y="326.7" text-anchor="middle">10</text><text x="1046.5" y="267.1" text-anchor="middle">12</text><text x="1046.5" y="207.5" text-anchor="middle">14</text></g>
<text transform="translate(302.7 407.3) rotate(-90)" text-anchor="middle" textLength="50.6" lengthAdjust="spacingAndGlyphs" font-family='"Liberation Sans", sans-serif' font-size="13" fill="#1e1e1e">Training</text>
<text transform="translate(1071 408.2) rotate(-90)" text-anchor="middle" textLength="47.6" lengthAdjust="spacingAndGlyphs" font-family='"Liberation Sans", sans-serif' font-size="13" fill="#1e1e1e">Residual</text>
<circle cx="362.9" cy="179.5" r="4.2" fill="#ea4022"/>
<rect x="461.8" y="175.5" width="8" height="8" fill="#0a3cf0"/>
<path d="M554.5 179.5H584" stroke="#ee66f2" stroke-width="1.5"/>
<path d="M568.6 175L572.8 183H564.4Z" fill="#ee55f5"/>
<rect x="657.5" y="175.5" width="30" height="8.5" fill="#dc3220" stroke="#a82010" stroke-width="0.8"/>
<g font-family='"Liberation Sans", sans-serif' font-size="12" fill="#1e1e1e"><text x="387" y="184">Training</text><text x="489" y="184">Test</text><text x="592" y="184">Predicted</text><text x="696" y="184">Residual</text></g>
</svg>
<div class="r" style="left:281px;top:661.4px;width:806px;height:135px;box-sizing:border-box;border:1.6px solid #d3d3d3;border-bottom:none;background:#fff"></div>
<div class="r" style="left:282.6px;top:663px;width:803px;height:30px;background:#d9d9d9"></div>
<div class="r" style="left:282.6px;top:663px;width:114.8px;height:30px;background:#ebebeb"></div>
<div class="r" style="left:282.6px;top:693px;width:114.8px;height:26px;background:#d3d3d3"></div>
<div class="r" style="left:282.6px;top:692.5px;width:803px;height:1.2px;background:#dedede"></div>
<div class="r" style="left:282.6px;top:718.5px;width:803px;height:1.2px;background:#dedede"></div>
<div class="r" style="left:282.6px;top:744.5px;width:803px;height:1.2px;background:#dedede"></div>
<div class="r" style="left:282.6px;top:770.5px;width:803px;height:1.2px;background:#dedede"></div>
<div class="r" style="left:396.9px;top:663px;width:1.2px;height:108px;background:#dedede"></div>
<div class="r" style="left:510.8px;top:663px;width:1.2px;height:108px;background:#dedede"></div>
<div class="r" style="left:625.5px;top:663px;width:1.2px;height:108px;background:#dedede"></div>
<div class="r" style="left:740.8px;top:663px;width:1.2px;height:108px;background:#dedede"></div>
<div class="r" style="left:855.8px;top:663px;width:1.2px;height:108px;background:#dedede"></div>
<div class="r" style="left:969.5px;top:663px;width:1.2px;height:108px;background:#dedede"></div>
<div class="r" style="left:1085.0px;top:663px;width:1.2px;height:108px;background:#dedede"></div>
<div class="t" style="left:291px;top:673.5px;font-size:14px;color:#404040;font-weight:normal;letter-spacing:0px;transform:scaleX(0.9433);transform-origin:0 0;">DataGroup</div>
<div class="t" style="left:405.7px;top:673.5px;font-size:14px;color:#404040;font-weight:normal;letter-spacing:0px;transform:scaleX(0.9290);transform-origin:0 0;">SampleCount</div>
<div class="t" style="left:520.7px;top:673.5px;font-size:14px;color:#404040;font-weight:normal;letter-spacing:0px;transform:scaleX(0.7711);transform-origin:0 0;">R2</div>
<div class="t" style="left:634.4px;top:673.5px;font-size:14px;color:#404040;font-weight:normal;letter-spacing:0px;transform:scaleX(0.9478);transform-origin:0 0;">AdjustedR2</div>
<div class="t" style="left:749.4px;top:673.5px;font-size:14px;color:#404040;font-weight:normal;letter-spacing:0px;transform:scaleX(0.8257);transform-origin:0 0;">RMSE</div>
<div class="t" style="left:864.5px;top:673.5px;font-size:14px;color:#404040;font-weight:normal;letter-spacing:0px;transform:scaleX(0.8947);transform-origin:0 0;">MAPE</div>
<div class="t" style="left:977.7px;top:673.5px;font-size:14px;color:#404040;font-weight:normal;letter-spacing:0px;transform:scaleX(0.8337);transform-origin:0 0;">NSE</div>
<div class="t" style="left:287px;top:700.2px;font-size:14px;color:#444;font-weight:normal;letter-spacing:0px;transform:scaleX(0.8956);transform-origin:0 0;">Train</div>
<div class="t" style="left:403px;top:700.2px;font-size:14px;color:#444;font-weight:normal;letter-spacing:0px;transform:scaleX(0.8049);transform-origin:0 0;">121</div>
<div class="t" style="left:515.3px;top:700.2px;font-size:14px;color:#444;font-weight:normal;letter-spacing:0px;transform:scaleX(0.8970);transform-origin:0 0;">0.73228</div>
<div class="t" style="left:630.9px;top:700.2px;font-size:14px;color:#444;font-weight:normal;letter-spacing:0px;transform:scaleX(0.8970);transform-origin:0 0;">0.70794</div>
<div class="t" style="left:745.4px;top:700.2px;font-size:14px;color:#444;font-weight:normal;letter-spacing:0px;transform:scaleX(0.8970);transform-origin:0 0;">0.23576</div>
<div class="t" style="left:860.9px;top:700.2px;font-size:14px;color:#444;font-weight:normal;letter-spacing:0px;transform:scaleX(0.8970);transform-origin:0 0;">0.18122</div>
<div class="t" style="left:974.5px;top:700.2px;font-size:14px;color:#444;font-weight:normal;letter-spacing:0px;transform:scaleX(0.8970);transform-origin:0 0;">0.73859</div>
<div class="t" style="left:287px;top:726.2px;font-size:14px;color:#444;font-weight:normal;letter-spacing:0px;transform:scaleX(0.8880);transform-origin:0 0;">Test</div>
<div class="t" style="left:403px;top:726.2px;font-size:14px;color:#444;font-weight:normal;letter-spacing:0px;transform:scaleX(0.8348);transform-origin:0 0;">53</div>
<div class="t" style="left:515.3px;top:726.2px;font-size:14px;color:#444;font-weight:normal;letter-spacing:0px;transform:scaleX(0.8970);transform-origin:0 0;">0.47244</div>
<div class="t" style="left:630.9px;top:726.2px;font-size:14px;color:#444;font-weight:normal;letter-spacing:0px;transform:scaleX(0.8970);transform-origin:0 0;">0.34683</div>
<div class="t" style="left:745.4px;top:726.2px;font-size:14px;color:#444;font-weight:normal;letter-spacing:0px;transform:scaleX(0.8970);transform-origin:0 0;">0.3327</div>
<div class="t" style="left:860.9px;top:726.2px;font-size:14px;color:#444;font-weight:normal;letter-spacing:0px;transform:scaleX(0.8970);transform-origin:0 0;">0.2185</div>
<div class="t" style="left:974.5px;top:726.2px;font-size:14px;color:#444;font-weight:normal;letter-spacing:0px;transform:scaleX(0.8970);transform-origin:0 0;">0.62371</div>
<div class="t" style="left:287px;top:752.2px;font-size:14px;color:#444;font-weight:normal;letter-spacing:0px;transform:scaleX(0.9502);transform-origin:0 0;">Total</div>
<div class="t" style="left:403px;top:752.2px;font-size:14px;color:#444;font-weight:normal;letter-spacing:0px;transform:scaleX(0.8220);transform-origin:0 0;">174</div>
<div class="t" style="left:515.3px;top:752.2px;font-size:14px;color:#444;font-weight:normal;letter-spacing:0px;transform:scaleX(0.8970);transform-origin:0 0;">0.68168</div>
<div class="t" style="left:630.9px;top:752.2px;font-size:14px;color:#444;font-weight:normal;letter-spacing:0px;transform:scaleX(0.8970);transform-origin:0 0;">0.66215</div>
<div class="t" style="left:745.4px;top:752.2px;font-size:14px;color:#444;font-weight:normal;letter-spacing:0px;transform:scaleX(0.8970);transform-origin:0 0;">0.26901</div>
<div class="t" style="left:860.9px;top:752.2px;font-size:14px;color:#444;font-weight:normal;letter-spacing:0px;transform:scaleX(0.8970);transform-origin:0 0;">0.19257</div>
<div class="t" style="left:974.5px;top:752.2px;font-size:14px;color:#444;font-weight:normal;letter-spacing:0px;transform:scaleX(0.8970);transform-origin:0 0;">0.70568</div>
<div class="r" style="left:0;top:791px;width:1102px;height:49px;background:#3888cd"></div>
<div class="t" style="left:19.2px;top:798.6px;font-size:14px;color:#e8f1fa;font-weight:normal;letter-spacing:0px;transform:scaleX(1.0119);transform-origin:0 0;">[Running time] 00:00:00.574</div>
</div></div></body></html>
